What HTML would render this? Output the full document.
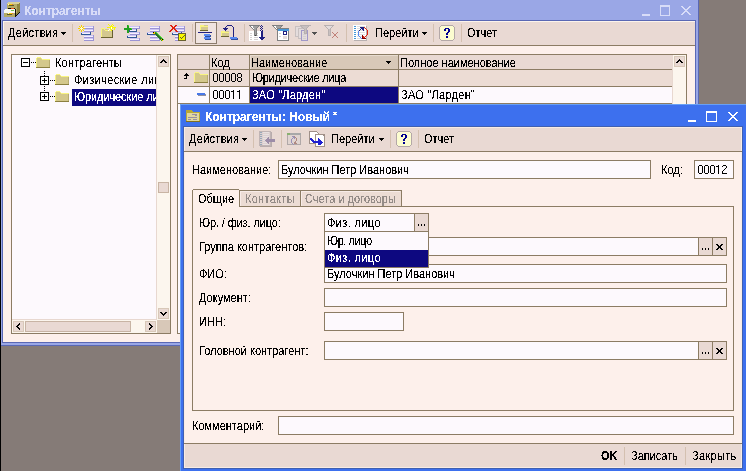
<!DOCTYPE html>
<html><head><meta charset="utf-8">
<style>
html,body{margin:0;padding:0;}
body{width:746px;height:471px;overflow:hidden;position:relative;background:#857b77;font-family:"Liberation Sans",sans-serif;font-size:11px;color:#000;}
.a{position:absolute;box-sizing:border-box;display:block;}
.t{position:absolute;white-space:pre;line-height:13px;font-size:11px;filter:url(#cr);}
.clip{position:absolute;overflow:hidden;}
.s{display:inline-block;transform:scaleY(1.125);transform-origin:0 10px;}
</style></head><body>
<svg width="0" height="0" style="position:absolute"><filter id="cr" x="0" y="0" width="100%" height="100%"><feComponentTransfer><feFuncA type="discrete" tableValues="0 0 0 0 0 0 0 0 0 0 0 0 0 0 0 0 0 0 0 0 0 0 0 0 0 0 0 0 0 0 0 0 0 0 0 0 0 0 0 0 0 0 0 0 1 1 1 1 1 1 1 1 1 1 1 1 1 1 1 1 1 1 1 1 1 1 1 1 1 1 1 1 1 1 1 1 1 1 1 1 1 1 1 1 1 1 1 1 1 1 1 1 1 1 1 1 1 1 1 1"/></feComponentTransfer></filter></svg>
<div class="a" style="left:0px;top:0px;width:1px;height:471px;background:#000;"></div>
<div class="a" style="left:1px;top:0px;width:698px;height:346px;background:#9aa7e6;"></div>
<div class="a" style="left:698px;top:0px;width:1px;height:346px;background:#5a68b4;"></div>
<div class="a" style="left:1px;top:345px;width:698px;height:1px;background:#5a68b4;"></div>
<div class="a" style="left:2px;top:20px;width:694px;height:1px;background:#5a68b4;"></div>
<div class="a" style="left:2px;top:20px;width:1px;height:323px;background:#5a68b4;"></div>
<div class="a" style="left:695px;top:20px;width:1px;height:323px;background:#5a68b4;"></div>
<div class="a" style="left:2px;top:342px;width:694px;height:1px;background:#5a68b4;"></div>
<svg class="a" style="left:2px;top:0px" width="20" height="17" shape-rendering="crispEdges"><rect x="6" y="2" width="12" height="1" fill="#d8d098"/><rect x="5" y="3" width="12" height="1" fill="#d8d098"/><rect x="17" y="3" width="1" height="1" fill="#8c8440"/><rect x="5" y="4" width="1" height="1" fill="#b4ac68"/><rect x="6" y="4" width="1" height="1" fill="#fff8c0"/><rect x="7" y="4" width="3" height="1" fill="#f8c800"/><rect x="10" y="4" width="1" height="1" fill="#f07030"/><rect x="11" y="4" width="4" height="1" fill="#b4ac68"/><rect x="15" y="4" width="3" height="1" fill="#8c8440"/><rect x="5" y="5" width="2" height="1" fill="#b4ac68"/><rect x="7" y="5" width="5" height="1" fill="#5c5828"/><rect x="12" y="5" width="3" height="1" fill="#b4ac68"/><rect x="15" y="5" width="3" height="1" fill="#8c8440"/><rect x="5" y="6" width="10" height="1" fill="#b4ac68"/><rect x="15" y="6" width="3" height="1" fill="#8c8440"/><rect x="5" y="7" width="10" height="1" fill="#b4ac68"/><rect x="15" y="7" width="3" height="1" fill="#8c8440"/><rect x="5" y="8" width="1" height="1" fill="#b4ac68"/><rect x="6" y="8" width="3" height="1" fill="#101008"/><rect x="9" y="8" width="3" height="1" fill="#f05818"/><rect x="12" y="8" width="1" height="1" fill="#101008"/><rect x="13" y="8" width="2" height="1" fill="#b4ac68"/><rect x="15" y="8" width="3" height="1" fill="#8c8440"/><rect x="3" y="9" width="10" height="1" fill="#f8f8f0"/><rect x="13" y="9" width="1" height="1" fill="#101008"/><rect x="14" y="9" width="1" height="1" fill="#b4ac68"/><rect x="15" y="9" width="3" height="1" fill="#8c8440"/><rect x="2" y="10" width="7" height="1" fill="#f8f8f0"/><rect x="9" y="10" width="3" height="1" fill="#70c050"/><rect x="12" y="10" width="1" height="1" fill="#f8f8f0"/><rect x="13" y="10" width="1" height="1" fill="#101008"/><rect x="14" y="10" width="1" height="1" fill="#b4ac68"/><rect x="15" y="10" width="3" height="1" fill="#8c8440"/><rect x="2" y="11" width="11" height="1" fill="#f8f8f0"/><rect x="13" y="11" width="1" height="1" fill="#101008"/><rect x="14" y="11" width="1" height="1" fill="#b4ac68"/><rect x="15" y="11" width="3" height="1" fill="#8c8440"/><rect x="2" y="12" width="11" height="1" fill="#f8f8f0"/><rect x="13" y="12" width="1" height="1" fill="#101008"/><rect x="14" y="12" width="1" height="1" fill="#b4ac68"/><rect x="15" y="12" width="2" height="1" fill="#8c8440"/><rect x="17" y="12" width="1" height="1" fill="#101008"/><rect x="2" y="13" width="4" height="1" fill="#b4ac68"/><rect x="6" y="13" width="1" height="1" fill="#fff8c0"/><rect x="7" y="13" width="3" height="1" fill="#f8c800"/><rect x="10" y="13" width="1" height="1" fill="#f07030"/><rect x="11" y="13" width="2" height="1" fill="#b4ac68"/><rect x="13" y="13" width="1" height="1" fill="#101008"/><rect x="14" y="13" width="2" height="1" fill="#8c8440"/><rect x="16" y="13" width="1" height="1" fill="#101008"/><rect x="2" y="14" width="3" height="1" fill="#b4ac68"/><rect x="5" y="14" width="5" height="1" fill="#5c5828"/><rect x="10" y="14" width="3" height="1" fill="#b4ac68"/><rect x="13" y="14" width="1" height="1" fill="#101008"/><rect x="14" y="14" width="1" height="1" fill="#8c8440"/><rect x="15" y="14" width="1" height="1" fill="#101008"/><rect x="2" y="15" width="11" height="1" fill="#b4ac68"/><rect x="13" y="15" width="2" height="1" fill="#101008"/><rect x="2" y="16" width="11" height="1" fill="#b4ac68"/><rect x="13" y="16" width="1" height="1" fill="#101008"/></svg>
<div class="t" style="left:24px;top:4px;color:#d8dcf8;font-weight:bold;font-size:12px;line-height:15px;">Контрагенты</div>
<div class="a" style="left:642px;top:14px;width:8px;height:2px;background:#d8dcf8;"></div>
<div class="a" style="left:660px;top:5px;width:10px;height:2px;background:#d8dcf8;"></div>
<div class="a" style="left:660px;top:5px;width:1px;height:11px;background:#d8dcf8;"></div>
<div class="a" style="left:669px;top:5px;width:1px;height:11px;background:#d8dcf8;"></div>
<div class="a" style="left:660px;top:15px;width:10px;height:1px;background:#d8dcf8;"></div>
<svg class="a" style="left:681px;top:6px" width="10" height="9" shape-rendering="crispEdges"><rect x="0" y="0" width="2" height="1" fill="#d8dcf8"/><rect x="8" y="0" width="2" height="1" fill="#d8dcf8"/><rect x="1" y="1" width="2" height="1" fill="#d8dcf8"/><rect x="7" y="1" width="2" height="1" fill="#d8dcf8"/><rect x="2" y="2" width="2" height="1" fill="#d8dcf8"/><rect x="6" y="2" width="2" height="1" fill="#d8dcf8"/><rect x="3" y="3" width="4" height="1" fill="#d8dcf8"/><rect x="4" y="4" width="2" height="1" fill="#d8dcf8"/><rect x="3" y="5" width="4" height="1" fill="#d8dcf8"/><rect x="2" y="6" width="2" height="1" fill="#d8dcf8"/><rect x="6" y="6" width="2" height="1" fill="#d8dcf8"/><rect x="1" y="7" width="2" height="1" fill="#d8dcf8"/><rect x="7" y="7" width="2" height="1" fill="#d8dcf8"/><rect x="0" y="8" width="2" height="1" fill="#d8dcf8"/><rect x="8" y="8" width="2" height="1" fill="#d8dcf8"/></svg>
<div class="a" style="left:3px;top:21px;width:692px;height:24px;background:#e9d9d3;"></div>
<div class="a" style="left:3px;top:21px;width:692px;height:1px;background:#fcf4ec;"></div>
<div class="a" style="left:3px;top:21px;width:1px;height:24px;background:#fcf4ec;"></div>
<div class="a" style="left:3px;top:45px;width:692px;height:1px;background:#8c7c64;"></div>
<div class="a" style="left:3px;top:46px;width:692px;height:296px;background:#fdf0eb;"></div>
<div class="t" style="left:8px;top:27px;letter-spacing:0.29px;"><span class="s">Действия</span></div>
<svg class="a" style="left:61px;top:32px;" width="5" height="3" viewBox="0 0 5 3" shape-rendering="crispEdges"><path d="M0 0h5v1h-1v1h-1v1h-1v-1h-1v-1h-1z" fill="#000"/></svg>
<div class="a" style="left:72px;top:24px;width:1px;height:18px;background:#d4c0b0;"></div>
<svg class="a" style="left:76px;top:22px" width="18" height="19" shape-rendering="crispEdges"><rect x="5" y="3" width="1" height="1" fill="#f8d000"/><rect x="3" y="4" width="1" height="1" fill="#f8d000"/><rect x="5" y="4" width="1" height="1" fill="#f8d000"/><rect x="7" y="4" width="1" height="1" fill="#f8d000"/><rect x="8" y="4" width="9" height="1" fill="#ccc4f4"/><rect x="17" y="4" width="1" height="1" fill="#9c94d4"/><rect x="4" y="5" width="1" height="1" fill="#f8d000"/><rect x="5" y="5" width="1" height="1" fill="#fffcd0"/><rect x="6" y="5" width="1" height="1" fill="#f8d000"/><rect x="8" y="5" width="9" height="1" fill="#f4f0fc"/><rect x="17" y="5" width="1" height="1" fill="#9c94d4"/><rect x="2" y="6" width="2" height="1" fill="#f8d000"/><rect x="4" y="6" width="3" height="1" fill="#fffcd0"/><rect x="7" y="6" width="2" height="1" fill="#f8d000"/><rect x="9" y="6" width="9" height="1" fill="#9c94d4"/><rect x="4" y="7" width="1" height="1" fill="#f8d000"/><rect x="5" y="7" width="1" height="1" fill="#fffcd0"/><rect x="6" y="7" width="1" height="1" fill="#f8d000"/><rect x="8" y="7" width="9" height="1" fill="#ccc4f4"/><rect x="17" y="7" width="1" height="1" fill="#9c94d4"/><rect x="3" y="8" width="1" height="1" fill="#f8d000"/><rect x="5" y="8" width="1" height="1" fill="#f8d000"/><rect x="7" y="8" width="1" height="1" fill="#f8d000"/><rect x="8" y="8" width="9" height="1" fill="#f4f0fc"/><rect x="17" y="8" width="1" height="1" fill="#9c94d4"/><rect x="5" y="9" width="1" height="1" fill="#f8d000"/><rect x="8" y="9" width="10" height="1" fill="#9c94d4"/><rect x="5" y="10" width="9" height="1" fill="#ccc4f4"/><rect x="14" y="10" width="1" height="1" fill="#305894"/><rect x="5" y="11" width="1" height="1" fill="#305894"/><rect x="6" y="11" width="8" height="1" fill="#f4f0fc"/><rect x="14" y="11" width="1" height="1" fill="#305894"/><rect x="5" y="12" width="10" height="1" fill="#305894"/><rect x="8" y="13" width="9" height="1" fill="#ccc4f4"/><rect x="17" y="13" width="1" height="1" fill="#9c94d4"/><rect x="8" y="14" width="9" height="1" fill="#f4f0fc"/><rect x="17" y="14" width="1" height="1" fill="#9c94d4"/><rect x="8" y="15" width="10" height="1" fill="#9c94d4"/><rect x="8" y="16" width="9" height="1" fill="#ccc4f4"/><rect x="17" y="16" width="1" height="1" fill="#9c94d4"/><rect x="8" y="17" width="9" height="1" fill="#f4f0fc"/><rect x="17" y="17" width="1" height="1" fill="#9c94d4"/><rect x="8" y="18" width="10" height="1" fill="#9c94d4"/></svg>
<svg class="a" style="left:98px;top:22px" width="19" height="17" shape-rendering="crispEdges"><rect x="10" y="2" width="1" height="1" fill="#f8f800"/><rect x="14" y="2" width="1" height="1" fill="#f8f800"/><rect x="11" y="3" width="1" height="1" fill="#f8f800"/><rect x="13" y="3" width="1" height="1" fill="#f8f800"/><rect x="15" y="3" width="1" height="1" fill="#f8f800"/><rect x="12" y="4" width="3" height="1" fill="#f8f800"/><rect x="9" y="5" width="4" height="1" fill="#f8f800"/><rect x="13" y="5" width="1" height="1" fill="#ffffff"/><rect x="14" y="5" width="4" height="1" fill="#f8f800"/><rect x="3" y="6" width="4" height="1" fill="#f8f480"/><rect x="12" y="6" width="1" height="1" fill="#f8f800"/><rect x="13" y="6" width="1" height="1" fill="#ffffff"/><rect x="14" y="6" width="1" height="1" fill="#f8f800"/><rect x="16" y="6" width="1" height="1" fill="#f8f800"/><rect x="3" y="7" width="1" height="1" fill="#f8f480"/><rect x="4" y="7" width="2" height="1" fill="#d4c890"/><rect x="6" y="7" width="1" height="1" fill="#f8f480"/><rect x="7" y="7" width="4" height="1" fill="#d4c890"/><rect x="11" y="7" width="1" height="1" fill="#ffffff"/><rect x="12" y="7" width="1" height="1" fill="#d4c890"/><rect x="13" y="7" width="1" height="1" fill="#f8f800"/><rect x="16" y="7" width="1" height="1" fill="#f8f800"/><rect x="3" y="8" width="1" height="1" fill="#f8f480"/><rect x="4" y="8" width="3" height="1" fill="#d4c890"/><rect x="7" y="8" width="3" height="1" fill="#f8f480"/><rect x="10" y="8" width="1" height="1" fill="#ffffff"/><rect x="11" y="8" width="2" height="1" fill="#f8f480"/><rect x="13" y="8" width="1" height="1" fill="#f8f800"/><rect x="14" y="8" width="1" height="1" fill="#686030"/><rect x="3" y="9" width="1" height="1" fill="#f8f480"/><rect x="4" y="9" width="10" height="1" fill="#d4c890"/><rect x="14" y="9" width="1" height="1" fill="#686030"/><rect x="3" y="10" width="1" height="1" fill="#f8f480"/><rect x="4" y="10" width="10" height="1" fill="#d4c890"/><rect x="14" y="10" width="1" height="1" fill="#686030"/><rect x="3" y="11" width="1" height="1" fill="#f8f480"/><rect x="4" y="11" width="10" height="1" fill="#d4c890"/><rect x="14" y="11" width="1" height="1" fill="#686030"/><rect x="3" y="12" width="1" height="1" fill="#f8f480"/><rect x="4" y="12" width="10" height="1" fill="#d4c890"/><rect x="14" y="12" width="1" height="1" fill="#686030"/><rect x="3" y="13" width="1" height="1" fill="#f8f480"/><rect x="4" y="13" width="10" height="1" fill="#d4c890"/><rect x="14" y="13" width="1" height="1" fill="#686030"/><rect x="3" y="14" width="1" height="1" fill="#f8f480"/><rect x="4" y="14" width="10" height="1" fill="#d4c890"/><rect x="14" y="14" width="1" height="1" fill="#686030"/><rect x="3" y="15" width="11" height="1" fill="#6c6430"/><rect x="14" y="15" width="1" height="1" fill="#686030"/></svg>
<svg class="a" style="left:122px;top:22px" width="18" height="19" shape-rendering="crispEdges"><rect x="5" y="3" width="1" height="1" fill="#20a020"/><rect x="6" y="3" width="1" height="1" fill="#58d838"/><rect x="5" y="4" width="2" height="1" fill="#20a020"/><rect x="8" y="4" width="9" height="1" fill="#ccc4f4"/><rect x="17" y="4" width="1" height="1" fill="#9c94d4"/><rect x="5" y="5" width="2" height="1" fill="#20a020"/><rect x="8" y="5" width="9" height="1" fill="#f4f0fc"/><rect x="17" y="5" width="1" height="1" fill="#9c94d4"/><rect x="2" y="6" width="7" height="1" fill="#20a020"/><rect x="9" y="6" width="1" height="1" fill="#58d838"/><rect x="10" y="6" width="8" height="1" fill="#9c94d4"/><rect x="2" y="7" width="8" height="1" fill="#20a020"/><rect x="10" y="7" width="4" height="1" fill="#ccc4f4"/><rect x="14" y="7" width="1" height="1" fill="#305894"/><rect x="5" y="8" width="2" height="1" fill="#20a020"/><rect x="7" y="8" width="1" height="1" fill="#305894"/><rect x="8" y="8" width="6" height="1" fill="#f4f0fc"/><rect x="14" y="8" width="1" height="1" fill="#305894"/><rect x="5" y="9" width="2" height="1" fill="#20a020"/><rect x="7" y="9" width="8" height="1" fill="#305894"/><rect x="5" y="10" width="2" height="1" fill="#20a020"/><rect x="8" y="10" width="9" height="1" fill="#ccc4f4"/><rect x="17" y="10" width="1" height="1" fill="#9c94d4"/><rect x="8" y="11" width="9" height="1" fill="#f4f0fc"/><rect x="17" y="11" width="1" height="1" fill="#9c94d4"/><rect x="8" y="12" width="10" height="1" fill="#9c94d4"/><rect x="5" y="13" width="9" height="1" fill="#ccc4f4"/><rect x="14" y="13" width="1" height="1" fill="#305894"/><rect x="5" y="14" width="1" height="1" fill="#305894"/><rect x="6" y="14" width="8" height="1" fill="#f4f0fc"/><rect x="14" y="14" width="1" height="1" fill="#305894"/><rect x="5" y="15" width="10" height="1" fill="#305894"/><rect x="8" y="16" width="9" height="1" fill="#ccc4f4"/><rect x="17" y="16" width="1" height="1" fill="#9c94d4"/><rect x="8" y="17" width="9" height="1" fill="#f4f0fc"/><rect x="17" y="17" width="1" height="1" fill="#9c94d4"/><rect x="8" y="18" width="10" height="1" fill="#9c94d4"/></svg>
<svg class="a" style="left:145px;top:22px" width="19" height="19" shape-rendering="crispEdges"><rect x="5" y="4" width="9" height="1" fill="#ccc4f4"/><rect x="14" y="4" width="1" height="1" fill="#9c94d4"/><rect x="5" y="5" width="9" height="1" fill="#f4f0fc"/><rect x="14" y="5" width="1" height="1" fill="#9c94d4"/><rect x="5" y="6" width="10" height="1" fill="#9c94d4"/><rect x="5" y="7" width="9" height="1" fill="#ccc4f4"/><rect x="14" y="7" width="1" height="1" fill="#9c94d4"/><rect x="5" y="8" width="9" height="1" fill="#f4f0fc"/><rect x="14" y="8" width="1" height="1" fill="#9c94d4"/><rect x="5" y="9" width="10" height="1" fill="#9c94d4"/><rect x="2" y="10" width="6" height="1" fill="#ccc4f4"/><rect x="8" y="10" width="1" height="1" fill="#000000"/><rect x="9" y="10" width="1" height="1" fill="#f8d000"/><rect x="10" y="10" width="1" height="1" fill="#20a020"/><rect x="11" y="10" width="1" height="1" fill="#58d838"/><rect x="2" y="11" width="1" height="1" fill="#305894"/><rect x="3" y="11" width="5" height="1" fill="#f4f0fc"/><rect x="8" y="11" width="2" height="1" fill="#f8d000"/><rect x="10" y="11" width="1" height="1" fill="#404040"/><rect x="11" y="11" width="1" height="1" fill="#20a020"/><rect x="12" y="11" width="1" height="1" fill="#58d838"/><rect x="2" y="12" width="8" height="1" fill="#305894"/><rect x="10" y="12" width="1" height="1" fill="#20a020"/><rect x="11" y="12" width="1" height="1" fill="#404040"/><rect x="12" y="12" width="1" height="1" fill="#20a020"/><rect x="13" y="12" width="1" height="1" fill="#58d838"/><rect x="5" y="13" width="6" height="1" fill="#ccc4f4"/><rect x="11" y="13" width="1" height="1" fill="#20a020"/><rect x="12" y="13" width="1" height="1" fill="#404040"/><rect x="13" y="13" width="1" height="1" fill="#20a020"/><rect x="14" y="13" width="1" height="1" fill="#58d838"/><rect x="5" y="14" width="7" height="1" fill="#f4f0fc"/><rect x="12" y="14" width="1" height="1" fill="#20a020"/><rect x="13" y="14" width="1" height="1" fill="#404040"/><rect x="14" y="14" width="1" height="1" fill="#20a020"/><rect x="15" y="14" width="1" height="1" fill="#58d838"/><rect x="5" y="15" width="8" height="1" fill="#9c94d4"/><rect x="13" y="15" width="1" height="1" fill="#20a020"/><rect x="14" y="15" width="1" height="1" fill="#404040"/><rect x="15" y="15" width="1" height="1" fill="#20a020"/><rect x="16" y="15" width="1" height="1" fill="#58d838"/><rect x="5" y="16" width="9" height="1" fill="#ccc4f4"/><rect x="14" y="16" width="1" height="1" fill="#20a020"/><rect x="15" y="16" width="1" height="1" fill="#404040"/><rect x="16" y="16" width="1" height="1" fill="#20a020"/><rect x="17" y="16" width="1" height="1" fill="#58d838"/><rect x="5" y="17" width="9" height="1" fill="#f4f0fc"/><rect x="14" y="17" width="1" height="1" fill="#9c94d4"/><rect x="15" y="17" width="1" height="1" fill="#20a020"/><rect x="16" y="17" width="1" height="1" fill="#f8d000"/><rect x="17" y="17" width="1" height="1" fill="#000000"/><rect x="18" y="17" width="1" height="1" fill="#58d838"/><rect x="5" y="18" width="10" height="1" fill="#9c94d4"/><rect x="16" y="18" width="1" height="1" fill="#20a020"/><rect x="17" y="18" width="1" height="1" fill="#f8d000"/></svg>
<svg class="a" style="left:168px;top:22px" width="19" height="19" shape-rendering="crispEdges"><rect x="2" y="3" width="2" height="1" fill="#e02010"/><rect x="7" y="3" width="2" height="1" fill="#e02010"/><rect x="3" y="4" width="2" height="1" fill="#e02010"/><rect x="6" y="4" width="2" height="1" fill="#e02010"/><rect x="8" y="4" width="8" height="1" fill="#ccc4f4"/><rect x="16" y="4" width="1" height="1" fill="#9c94d4"/><rect x="4" y="5" width="3" height="1" fill="#e02010"/><rect x="7" y="5" width="9" height="1" fill="#f4f0fc"/><rect x="16" y="5" width="1" height="1" fill="#9c94d4"/><rect x="4" y="6" width="3" height="1" fill="#e02010"/><rect x="7" y="6" width="10" height="1" fill="#9c94d4"/><rect x="3" y="7" width="2" height="1" fill="#e02010"/><rect x="6" y="7" width="2" height="1" fill="#e02010"/><rect x="8" y="7" width="8" height="1" fill="#ccc4f4"/><rect x="16" y="7" width="1" height="1" fill="#9c94d4"/><rect x="2" y="8" width="2" height="1" fill="#e02010"/><rect x="7" y="8" width="2" height="1" fill="#e02010"/><rect x="9" y="8" width="7" height="1" fill="#f4f0fc"/><rect x="16" y="8" width="1" height="1" fill="#9c94d4"/><rect x="1" y="9" width="2" height="1" fill="#e02010"/><rect x="7" y="9" width="1" height="1" fill="#9c94d4"/><rect x="8" y="9" width="2" height="1" fill="#e02010"/><rect x="10" y="9" width="7" height="1" fill="#9c94d4"/><rect x="4" y="10" width="9" height="1" fill="#ccc4f4"/><rect x="13" y="10" width="1" height="1" fill="#305894"/><rect x="4" y="11" width="1" height="1" fill="#305894"/><rect x="5" y="11" width="5" height="1" fill="#f4f0fc"/><rect x="10" y="11" width="8" height="1" fill="#686030"/><rect x="4" y="12" width="6" height="1" fill="#305894"/><rect x="10" y="12" width="1" height="1" fill="#686030"/><rect x="11" y="12" width="6" height="1" fill="#f8f800"/><rect x="17" y="12" width="1" height="1" fill="#686030"/><rect x="7" y="13" width="3" height="1" fill="#ccc4f4"/><rect x="10" y="13" width="1" height="1" fill="#686030"/><rect x="11" y="13" width="5" height="1" fill="#f8f800"/><rect x="16" y="13" width="2" height="1" fill="#686030"/><rect x="7" y="14" width="3" height="1" fill="#f4f0fc"/><rect x="10" y="14" width="1" height="1" fill="#686030"/><rect x="11" y="14" width="4" height="1" fill="#f8f800"/><rect x="15" y="14" width="1" height="1" fill="#686030"/><rect x="16" y="14" width="1" height="1" fill="#f8f800"/><rect x="17" y="14" width="1" height="1" fill="#686030"/><rect x="7" y="15" width="3" height="1" fill="#9c94d4"/><rect x="10" y="15" width="1" height="1" fill="#686030"/><rect x="11" y="15" width="1" height="1" fill="#f8f800"/><rect x="12" y="15" width="1" height="1" fill="#686030"/><rect x="13" y="15" width="1" height="1" fill="#f8f800"/><rect x="14" y="15" width="1" height="1" fill="#686030"/><rect x="15" y="15" width="2" height="1" fill="#f8f800"/><rect x="17" y="15" width="1" height="1" fill="#686030"/><rect x="7" y="16" width="3" height="1" fill="#ccc4f4"/><rect x="10" y="16" width="1" height="1" fill="#686030"/><rect x="11" y="16" width="2" height="1" fill="#f8f800"/><rect x="13" y="16" width="1" height="1" fill="#686030"/><rect x="14" y="16" width="3" height="1" fill="#f8f800"/><rect x="17" y="16" width="1" height="1" fill="#686030"/><rect x="7" y="17" width="3" height="1" fill="#f4f0fc"/><rect x="10" y="17" width="1" height="1" fill="#686030"/><rect x="11" y="17" width="6" height="1" fill="#f8f800"/><rect x="17" y="17" width="1" height="1" fill="#686030"/><rect x="7" y="18" width="3" height="1" fill="#9c94d4"/><rect x="10" y="18" width="8" height="1" fill="#686030"/></svg>
<div class="a" style="left:192px;top:24px;width:1px;height:18px;background:#d4c0b0;"></div>
<div class="a" style="left:195px;top:22px;width:22px;height:22px;border:1px solid #8c7c6c;background:#f0e4e0;"></div>
<svg class="a" style="left:194px;top:21px" width="18" height="20" shape-rendering="crispEdges"><rect x="6" y="4" width="4" height="1" fill="#f8f480"/><rect x="10" y="4" width="4" height="1" fill="#d4c890"/><rect x="6" y="5" width="8" height="1" fill="#f8f480"/><rect x="6" y="6" width="1" height="1" fill="#f8f480"/><rect x="7" y="6" width="7" height="1" fill="#d4c890"/><rect x="6" y="7" width="1" height="1" fill="#f8f480"/><rect x="7" y="7" width="7" height="1" fill="#d4c890"/><rect x="6" y="8" width="1" height="1" fill="#f8f480"/><rect x="7" y="8" width="7" height="1" fill="#d4c890"/><rect x="6" y="9" width="8" height="1" fill="#6c6430"/><rect x="4" y="11" width="14" height="1" fill="#202080"/><rect x="10" y="13" width="6" height="1" fill="#5888f0"/><rect x="10" y="14" width="6" height="1" fill="#5888f0"/><rect x="16" y="14" width="1" height="1" fill="#3050a0"/><rect x="11" y="15" width="6" height="1" fill="#3050a0"/><rect x="10" y="16" width="6" height="1" fill="#5888f0"/><rect x="10" y="17" width="6" height="1" fill="#5888f0"/><rect x="16" y="17" width="1" height="1" fill="#3050a0"/><rect x="11" y="18" width="6" height="1" fill="#3050a0"/></svg>
<svg class="a" style="left:219px;top:22px" width="19" height="19" shape-rendering="crispEdges"><rect x="8" y="3" width="5" height="1" fill="#202080"/><rect x="7" y="4" width="1" height="1" fill="#202080"/><rect x="13" y="4" width="1" height="1" fill="#202080"/><rect x="6" y="5" width="1" height="1" fill="#202080"/><rect x="14" y="5" width="1" height="1" fill="#202080"/><rect x="4" y="6" width="5" height="1" fill="#202080"/><rect x="14" y="6" width="1" height="1" fill="#202080"/><rect x="5" y="7" width="3" height="1" fill="#202080"/><rect x="14" y="7" width="1" height="1" fill="#202080"/><rect x="6" y="8" width="1" height="1" fill="#202080"/><rect x="14" y="8" width="1" height="1" fill="#202080"/><rect x="2" y="9" width="4" height="1" fill="#f8f480"/><rect x="6" y="9" width="4" height="1" fill="#d4c890"/><rect x="14" y="9" width="1" height="1" fill="#202080"/><rect x="2" y="10" width="8" height="1" fill="#f8f480"/><rect x="14" y="10" width="1" height="1" fill="#202080"/><rect x="2" y="11" width="1" height="1" fill="#f8f480"/><rect x="3" y="11" width="7" height="1" fill="#d4c890"/><rect x="14" y="11" width="1" height="1" fill="#202080"/><rect x="2" y="12" width="1" height="1" fill="#f8f480"/><rect x="3" y="12" width="7" height="1" fill="#d4c890"/><rect x="14" y="12" width="1" height="1" fill="#202080"/><rect x="2" y="13" width="1" height="1" fill="#f8f480"/><rect x="3" y="13" width="7" height="1" fill="#d4c890"/><rect x="14" y="13" width="1" height="1" fill="#202080"/><rect x="2" y="14" width="8" height="1" fill="#6c6430"/><rect x="14" y="14" width="1" height="1" fill="#202080"/><rect x="11" y="15" width="7" height="1" fill="#5888f0"/><rect x="11" y="16" width="7" height="1" fill="#5888f0"/><rect x="18" y="16" width="1" height="1" fill="#3050a0"/><rect x="12" y="17" width="7" height="1" fill="#3050a0"/></svg>
<div class="a" style="left:244px;top:24px;width:1px;height:18px;background:#d4c0b0;"></div>
<svg class="a" style="left:246px;top:22px" width="19" height="19" shape-rendering="crispEdges"><rect x="3" y="3" width="11" height="1" fill="#808080"/><rect x="15" y="3" width="1" height="1" fill="#202080"/><rect x="4" y="4" width="1" height="1" fill="#808080"/><rect x="5" y="4" width="2" height="1" fill="#ffffff"/><rect x="7" y="4" width="5" height="1" fill="#a0a0a0"/><rect x="12" y="4" width="1" height="1" fill="#808080"/><rect x="14" y="4" width="1" height="1" fill="#202080"/><rect x="16" y="4" width="1" height="1" fill="#202080"/><rect x="5" y="5" width="1" height="1" fill="#808080"/><rect x="6" y="5" width="1" height="1" fill="#ffffff"/><rect x="7" y="5" width="4" height="1" fill="#a0a0a0"/><rect x="11" y="5" width="1" height="1" fill="#808080"/><rect x="15" y="5" width="1" height="1" fill="#202080"/><rect x="6" y="6" width="1" height="1" fill="#808080"/><rect x="7" y="6" width="1" height="1" fill="#ffffff"/><rect x="8" y="6" width="2" height="1" fill="#a0a0a0"/><rect x="10" y="6" width="1" height="1" fill="#808080"/><rect x="14" y="6" width="1" height="1" fill="#202080"/><rect x="16" y="6" width="1" height="1" fill="#202080"/><rect x="7" y="7" width="1" height="1" fill="#808080"/><rect x="8" y="7" width="2" height="1" fill="#a0a0a0"/><rect x="10" y="7" width="1" height="1" fill="#808080"/><rect x="15" y="7" width="1" height="1" fill="#202080"/><rect x="8" y="8" width="1" height="1" fill="#808080"/><rect x="9" y="8" width="1" height="1" fill="#a0a0a0"/><rect x="10" y="8" width="1" height="1" fill="#808080"/><rect x="14" y="8" width="1" height="1" fill="#202080"/><rect x="16" y="8" width="1" height="1" fill="#202080"/><rect x="3" y="9" width="5" height="1" fill="#ffffff"/><rect x="8" y="9" width="1" height="1" fill="#808080"/><rect x="9" y="9" width="1" height="1" fill="#a0a0a0"/><rect x="10" y="9" width="1" height="1" fill="#808080"/><rect x="11" y="9" width="4" height="1" fill="#ffffff"/><rect x="15" y="9" width="2" height="1" fill="#202080"/><rect x="3" y="10" width="5" height="1" fill="#ffffff"/><rect x="8" y="10" width="1" height="1" fill="#808080"/><rect x="9" y="10" width="1" height="1" fill="#a0a0a0"/><rect x="10" y="10" width="1" height="1" fill="#808080"/><rect x="11" y="10" width="4" height="1" fill="#ffffff"/><rect x="15" y="10" width="2" height="1" fill="#202080"/><rect x="3" y="11" width="1" height="1" fill="#ffffff"/><rect x="4" y="11" width="2" height="1" fill="#d4d0d0"/><rect x="6" y="11" width="2" height="1" fill="#ffffff"/><rect x="8" y="11" width="1" height="1" fill="#808080"/><rect x="9" y="11" width="1" height="1" fill="#a0a0a0"/><rect x="10" y="11" width="1" height="1" fill="#808080"/><rect x="11" y="11" width="1" height="1" fill="#d4d0d0"/><rect x="12" y="11" width="3" height="1" fill="#ffffff"/><rect x="15" y="11" width="2" height="1" fill="#202080"/><rect x="3" y="12" width="5" height="1" fill="#ffffff"/><rect x="8" y="12" width="1" height="1" fill="#808080"/><rect x="9" y="12" width="1" height="1" fill="#a0a0a0"/><rect x="10" y="12" width="1" height="1" fill="#808080"/><rect x="11" y="12" width="4" height="1" fill="#ffffff"/><rect x="15" y="12" width="2" height="1" fill="#202080"/><rect x="3" y="13" width="1" height="1" fill="#ffffff"/><rect x="4" y="13" width="2" height="1" fill="#d4d0d0"/><rect x="6" y="13" width="2" height="1" fill="#ffffff"/><rect x="8" y="13" width="1" height="1" fill="#808080"/><rect x="9" y="13" width="1" height="1" fill="#404040"/><rect x="10" y="13" width="1" height="1" fill="#808080"/><rect x="11" y="13" width="1" height="1" fill="#d4d0d0"/><rect x="12" y="13" width="3" height="1" fill="#ffffff"/><rect x="15" y="13" width="2" height="1" fill="#202080"/><rect x="3" y="14" width="12" height="1" fill="#ffffff"/><rect x="15" y="14" width="2" height="1" fill="#202080"/><rect x="3" y="15" width="1" height="1" fill="#ffffff"/><rect x="4" y="15" width="2" height="1" fill="#d4d0d0"/><rect x="6" y="15" width="2" height="1" fill="#ffffff"/><rect x="8" y="15" width="4" height="1" fill="#d4d0d0"/><rect x="12" y="15" width="1" height="1" fill="#ffffff"/><rect x="13" y="15" width="6" height="1" fill="#202080"/><rect x="3" y="16" width="11" height="1" fill="#ffffff"/><rect x="14" y="16" width="4" height="1" fill="#202080"/><rect x="3" y="17" width="1" height="1" fill="#ffffff"/><rect x="4" y="17" width="2" height="1" fill="#d4d0d0"/><rect x="6" y="17" width="2" height="1" fill="#ffffff"/><rect x="8" y="17" width="4" height="1" fill="#d4d0d0"/><rect x="12" y="17" width="3" height="1" fill="#ffffff"/><rect x="15" y="17" width="2" height="1" fill="#202080"/><rect x="3" y="18" width="12" height="1" fill="#ffffff"/></svg>
<svg class="a" style="left:269px;top:22px" width="20" height="19" shape-rendering="crispEdges"><rect x="3" y="3" width="11" height="1" fill="#808080"/><rect x="4" y="4" width="1" height="1" fill="#808080"/><rect x="5" y="4" width="2" height="1" fill="#ffffff"/><rect x="7" y="4" width="5" height="1" fill="#a0a0a0"/><rect x="12" y="4" width="1" height="1" fill="#808080"/><rect x="5" y="5" width="1" height="1" fill="#808080"/><rect x="6" y="5" width="1" height="1" fill="#ffffff"/><rect x="7" y="5" width="4" height="1" fill="#a0a0a0"/><rect x="11" y="5" width="1" height="1" fill="#808080"/><rect x="6" y="6" width="1" height="1" fill="#808080"/><rect x="7" y="6" width="1" height="1" fill="#ffffff"/><rect x="8" y="6" width="12" height="1" fill="#808080"/><rect x="7" y="7" width="2" height="1" fill="#808080"/><rect x="9" y="7" width="11" height="1" fill="#4898d8"/><rect x="8" y="8" width="1" height="1" fill="#808080"/><rect x="9" y="8" width="11" height="1" fill="#4898d8"/><rect x="8" y="9" width="1" height="1" fill="#808080"/><rect x="9" y="9" width="5" height="1" fill="#ffffff"/><rect x="14" y="9" width="4" height="1" fill="#202080"/><rect x="18" y="9" width="1" height="1" fill="#ffffff"/><rect x="19" y="9" width="1" height="1" fill="#808080"/><rect x="8" y="10" width="1" height="1" fill="#808080"/><rect x="9" y="10" width="5" height="1" fill="#ffffff"/><rect x="14" y="10" width="1" height="1" fill="#202080"/><rect x="15" y="10" width="2" height="1" fill="#ffffff"/><rect x="17" y="10" width="1" height="1" fill="#202080"/><rect x="18" y="10" width="1" height="1" fill="#ffffff"/><rect x="19" y="10" width="1" height="1" fill="#808080"/><rect x="8" y="11" width="1" height="1" fill="#808080"/><rect x="9" y="11" width="1" height="1" fill="#ffffff"/><rect x="10" y="11" width="2" height="1" fill="#d4d0d0"/><rect x="12" y="11" width="2" height="1" fill="#ffffff"/><rect x="14" y="11" width="1" height="1" fill="#202080"/><rect x="15" y="11" width="2" height="1" fill="#ffffff"/><rect x="17" y="11" width="1" height="1" fill="#202080"/><rect x="18" y="11" width="1" height="1" fill="#ffffff"/><rect x="19" y="11" width="1" height="1" fill="#808080"/><rect x="8" y="12" width="1" height="1" fill="#808080"/><rect x="9" y="12" width="5" height="1" fill="#ffffff"/><rect x="14" y="12" width="4" height="1" fill="#202080"/><rect x="18" y="12" width="1" height="1" fill="#ffffff"/><rect x="19" y="12" width="1" height="1" fill="#808080"/><rect x="8" y="13" width="1" height="1" fill="#808080"/><rect x="9" y="13" width="10" height="1" fill="#ffffff"/><rect x="19" y="13" width="1" height="1" fill="#808080"/><rect x="8" y="14" width="1" height="1" fill="#808080"/><rect x="9" y="14" width="1" height="1" fill="#ffffff"/><rect x="10" y="14" width="2" height="1" fill="#d4d0d0"/><rect x="12" y="14" width="2" height="1" fill="#ffffff"/><rect x="14" y="14" width="4" height="1" fill="#e4dcdc"/><rect x="18" y="14" width="1" height="1" fill="#ffffff"/><rect x="19" y="14" width="1" height="1" fill="#808080"/><rect x="8" y="15" width="1" height="1" fill="#808080"/><rect x="9" y="15" width="5" height="1" fill="#ffffff"/><rect x="14" y="15" width="4" height="1" fill="#e4dcdc"/><rect x="18" y="15" width="1" height="1" fill="#ffffff"/><rect x="19" y="15" width="1" height="1" fill="#808080"/><rect x="8" y="16" width="1" height="1" fill="#808080"/><rect x="9" y="16" width="5" height="1" fill="#ffffff"/><rect x="14" y="16" width="4" height="1" fill="#e4dcdc"/><rect x="18" y="16" width="1" height="1" fill="#ffffff"/><rect x="19" y="16" width="1" height="1" fill="#808080"/><rect x="8" y="17" width="1" height="1" fill="#808080"/><rect x="9" y="17" width="10" height="1" fill="#ffffff"/><rect x="19" y="17" width="1" height="1" fill="#808080"/><rect x="8" y="18" width="12" height="1" fill="#808080"/></svg>
<svg class="a" style="left:292px;top:22px" width="19" height="19" shape-rendering="crispEdges"><rect x="8" y="3" width="11" height="1" fill="#b8b0b0"/><rect x="3" y="4" width="6" height="1" fill="#c8c0c0"/><rect x="9" y="4" width="1" height="1" fill="#b8b0b0"/><rect x="10" y="4" width="6" height="1" fill="#c8c0c0"/><rect x="16" y="4" width="1" height="1" fill="#b8b0b0"/><rect x="3" y="5" width="1" height="1" fill="#c8c0c0"/><rect x="4" y="5" width="5" height="1" fill="#e4dcdc"/><rect x="9" y="5" width="1" height="1" fill="#c8c0c0"/><rect x="10" y="5" width="1" height="1" fill="#b8b0b0"/><rect x="11" y="5" width="4" height="1" fill="#c8c0c0"/><rect x="15" y="5" width="1" height="1" fill="#b8b0b0"/><rect x="3" y="6" width="1" height="1" fill="#c8c0c0"/><rect x="4" y="6" width="2" height="1" fill="#e4dcdc"/><rect x="6" y="6" width="5" height="1" fill="#c8c0c0"/><rect x="11" y="6" width="1" height="1" fill="#b8b0b0"/><rect x="12" y="6" width="2" height="1" fill="#c8c0c0"/><rect x="14" y="6" width="1" height="1" fill="#b8b0b0"/><rect x="3" y="7" width="1" height="1" fill="#c8c0c0"/><rect x="4" y="7" width="2" height="1" fill="#e4dcdc"/><rect x="6" y="7" width="1" height="1" fill="#c8c0c0"/><rect x="7" y="7" width="5" height="1" fill="#e4dcdc"/><rect x="12" y="7" width="1" height="1" fill="#b8b0b0"/><rect x="13" y="7" width="1" height="1" fill="#c8c0c0"/><rect x="14" y="7" width="1" height="1" fill="#b8b0b0"/><rect x="3" y="8" width="1" height="1" fill="#c8c0c0"/><rect x="4" y="8" width="2" height="1" fill="#e4dcdc"/><rect x="6" y="8" width="1" height="1" fill="#c8c0c0"/><rect x="7" y="8" width="2" height="1" fill="#e4dcdc"/><rect x="9" y="8" width="3" height="1" fill="#a098c8"/><rect x="12" y="8" width="1" height="1" fill="#b8b0b0"/><rect x="13" y="8" width="1" height="1" fill="#c8c0c0"/><rect x="14" y="8" width="1" height="1" fill="#b8b0b0"/><rect x="15" y="8" width="1" height="1" fill="#a098c8"/><rect x="3" y="9" width="1" height="1" fill="#c8c0c0"/><rect x="4" y="9" width="2" height="1" fill="#e4dcdc"/><rect x="6" y="9" width="1" height="1" fill="#c8c0c0"/><rect x="7" y="9" width="2" height="1" fill="#e4dcdc"/><rect x="9" y="9" width="1" height="1" fill="#a098c8"/><rect x="10" y="9" width="2" height="1" fill="#e4dcdc"/><rect x="12" y="9" width="1" height="1" fill="#b8b0b0"/><rect x="13" y="9" width="1" height="1" fill="#c8c0c0"/><rect x="14" y="9" width="1" height="1" fill="#b8b0b0"/><rect x="15" y="9" width="1" height="1" fill="#a098c8"/><rect x="3" y="10" width="1" height="1" fill="#c8c0c0"/><rect x="4" y="10" width="2" height="1" fill="#e4dcdc"/><rect x="6" y="10" width="1" height="1" fill="#c8c0c0"/><rect x="7" y="10" width="2" height="1" fill="#e4dcdc"/><rect x="9" y="10" width="1" height="1" fill="#a098c8"/><rect x="10" y="10" width="1" height="1" fill="#e4dcdc"/><rect x="11" y="10" width="1" height="1" fill="#d4d0d0"/><rect x="12" y="10" width="1" height="1" fill="#b8b0b0"/><rect x="13" y="10" width="1" height="1" fill="#c8c0c0"/><rect x="14" y="10" width="1" height="1" fill="#b8b0b0"/><rect x="15" y="10" width="1" height="1" fill="#a098c8"/><rect x="3" y="11" width="1" height="1" fill="#c8c0c0"/><rect x="4" y="11" width="2" height="1" fill="#e4dcdc"/><rect x="6" y="11" width="1" height="1" fill="#c8c0c0"/><rect x="7" y="11" width="2" height="1" fill="#e4dcdc"/><rect x="9" y="11" width="1" height="1" fill="#a098c8"/><rect x="10" y="11" width="2" height="1" fill="#e4dcdc"/><rect x="12" y="11" width="3" height="1" fill="#b8b0b0"/><rect x="15" y="11" width="1" height="1" fill="#a098c8"/><rect x="3" y="12" width="1" height="1" fill="#c8c0c0"/><rect x="4" y="12" width="2" height="1" fill="#e4dcdc"/><rect x="6" y="12" width="1" height="1" fill="#c8c0c0"/><rect x="7" y="12" width="2" height="1" fill="#e4dcdc"/><rect x="9" y="12" width="1" height="1" fill="#a098c8"/><rect x="10" y="12" width="1" height="1" fill="#e4dcdc"/><rect x="11" y="12" width="3" height="1" fill="#d4d0d0"/><rect x="14" y="12" width="1" height="1" fill="#e4dcdc"/><rect x="15" y="12" width="1" height="1" fill="#a098c8"/><rect x="3" y="13" width="1" height="1" fill="#c8c0c0"/><rect x="4" y="13" width="2" height="1" fill="#e4dcdc"/><rect x="6" y="13" width="1" height="1" fill="#c8c0c0"/><rect x="7" y="13" width="2" height="1" fill="#e4dcdc"/><rect x="9" y="13" width="1" height="1" fill="#a098c8"/><rect x="10" y="13" width="5" height="1" fill="#e4dcdc"/><rect x="15" y="13" width="1" height="1" fill="#a098c8"/><rect x="3" y="14" width="4" height="1" fill="#c8c0c0"/><rect x="7" y="14" width="2" height="1" fill="#e4dcdc"/><rect x="9" y="14" width="1" height="1" fill="#a098c8"/><rect x="10" y="14" width="1" height="1" fill="#e4dcdc"/><rect x="11" y="14" width="3" height="1" fill="#d4d0d0"/><rect x="14" y="14" width="1" height="1" fill="#e4dcdc"/><rect x="15" y="14" width="1" height="1" fill="#a098c8"/><rect x="6" y="15" width="1" height="1" fill="#c8c0c0"/><rect x="7" y="15" width="2" height="1" fill="#e4dcdc"/><rect x="9" y="15" width="1" height="1" fill="#a098c8"/><rect x="10" y="15" width="5" height="1" fill="#e4dcdc"/><rect x="15" y="15" width="1" height="1" fill="#a098c8"/><rect x="6" y="16" width="3" height="1" fill="#c8c0c0"/><rect x="9" y="16" width="1" height="1" fill="#a098c8"/><rect x="10" y="16" width="1" height="1" fill="#e4dcdc"/><rect x="11" y="16" width="3" height="1" fill="#d4d0d0"/><rect x="14" y="16" width="1" height="1" fill="#e4dcdc"/><rect x="15" y="16" width="1" height="1" fill="#a098c8"/><rect x="9" y="17" width="1" height="1" fill="#a098c8"/><rect x="10" y="17" width="5" height="1" fill="#e4dcdc"/><rect x="15" y="17" width="1" height="1" fill="#a098c8"/><rect x="9" y="18" width="7" height="1" fill="#a098c8"/></svg>
<svg class="a" style="left:312px;top:32px;" width="5" height="3" viewBox="0 0 5 3" shape-rendering="crispEdges"><path d="M0 0h5v1h-1v1h-1v1h-1v-1h-1v-1h-1z" fill="#505050"/></svg>
<svg class="a" style="left:322px;top:22px" width="17" height="19" shape-rendering="crispEdges"><rect x="2" y="3" width="10" height="1" fill="#b8b0b0"/><rect x="3" y="4" width="1" height="1" fill="#b8b0b0"/><rect x="4" y="4" width="6" height="1" fill="#e4dcdc"/><rect x="10" y="4" width="1" height="1" fill="#b8b0b0"/><rect x="4" y="5" width="1" height="1" fill="#b8b0b0"/><rect x="5" y="5" width="4" height="1" fill="#e4dcdc"/><rect x="9" y="5" width="1" height="1" fill="#b8b0b0"/><rect x="5" y="6" width="1" height="1" fill="#b8b0b0"/><rect x="6" y="6" width="2" height="1" fill="#e4dcdc"/><rect x="8" y="6" width="1" height="1" fill="#b8b0b0"/><rect x="6" y="7" width="1" height="1" fill="#b8b0b0"/><rect x="7" y="7" width="1" height="1" fill="#c8c0c0"/><rect x="8" y="7" width="1" height="1" fill="#b8b0b0"/><rect x="6" y="8" width="1" height="1" fill="#b8b0b0"/><rect x="7" y="8" width="1" height="1" fill="#c8c0c0"/><rect x="8" y="8" width="1" height="1" fill="#b8b0b0"/><rect x="6" y="9" width="1" height="1" fill="#b8b0b0"/><rect x="7" y="9" width="1" height="1" fill="#c8c0c0"/><rect x="8" y="9" width="1" height="1" fill="#b8b0b0"/><rect x="6" y="10" width="1" height="1" fill="#b8b0b0"/><rect x="7" y="10" width="1" height="1" fill="#c8c0c0"/><rect x="8" y="10" width="1" height="1" fill="#b8b0b0"/><rect x="10" y="10" width="1" height="1" fill="#c08078"/><rect x="15" y="10" width="1" height="1" fill="#c08078"/><rect x="6" y="11" width="1" height="1" fill="#b8b0b0"/><rect x="7" y="11" width="1" height="1" fill="#c8c0c0"/><rect x="8" y="11" width="1" height="1" fill="#b8b0b0"/><rect x="11" y="11" width="1" height="1" fill="#c08078"/><rect x="14" y="11" width="1" height="1" fill="#c08078"/><rect x="6" y="12" width="1" height="1" fill="#b8b0b0"/><rect x="7" y="12" width="1" height="1" fill="#c8c0c0"/><rect x="8" y="12" width="1" height="1" fill="#b8b0b0"/><rect x="12" y="12" width="2" height="1" fill="#c08078"/><rect x="6" y="13" width="3" height="1" fill="#b8b0b0"/><rect x="12" y="13" width="2" height="1" fill="#c08078"/><rect x="11" y="14" width="1" height="1" fill="#c08078"/><rect x="14" y="14" width="1" height="1" fill="#c08078"/><rect x="10" y="15" width="1" height="1" fill="#c08078"/><rect x="15" y="15" width="1" height="1" fill="#c08078"/></svg>
<svg class="a" style="left:348px;top:22px" width="21" height="19" shape-rendering="crispEdges"><rect x="5" y="3" width="13" height="1" fill="#ffffff"/><rect x="5" y="4" width="1" height="1" fill="#ffffff"/><rect x="6" y="4" width="2" height="1" fill="#4898d8"/><rect x="8" y="4" width="1" height="1" fill="#ffffff"/><rect x="9" y="4" width="8" height="1" fill="#e0e0e0"/><rect x="17" y="4" width="1" height="1" fill="#ffffff"/><rect x="18" y="4" width="1" height="1" fill="#b8b0b0"/><rect x="5" y="5" width="7" height="1" fill="#ffffff"/><rect x="12" y="5" width="4" height="1" fill="#202080"/><rect x="16" y="5" width="1" height="1" fill="#e02010"/><rect x="17" y="5" width="1" height="1" fill="#ffffff"/><rect x="18" y="5" width="1" height="1" fill="#b8b0b0"/><rect x="5" y="6" width="1" height="1" fill="#ffffff"/><rect x="6" y="6" width="2" height="1" fill="#4898d8"/><rect x="8" y="6" width="1" height="1" fill="#ffffff"/><rect x="9" y="6" width="4" height="1" fill="#e0e0e0"/><rect x="13" y="6" width="3" height="1" fill="#202080"/><rect x="16" y="6" width="1" height="1" fill="#e0e0e0"/><rect x="17" y="6" width="1" height="1" fill="#e02010"/><rect x="18" y="6" width="1" height="1" fill="#b8b0b0"/><rect x="5" y="7" width="7" height="1" fill="#ffffff"/><rect x="12" y="7" width="1" height="1" fill="#202080"/><rect x="13" y="7" width="1" height="1" fill="#ffffff"/><rect x="14" y="7" width="2" height="1" fill="#202080"/><rect x="16" y="7" width="2" height="1" fill="#ffffff"/><rect x="18" y="7" width="1" height="1" fill="#e02010"/><rect x="5" y="8" width="1" height="1" fill="#ffffff"/><rect x="6" y="8" width="2" height="1" fill="#4898d8"/><rect x="8" y="8" width="1" height="1" fill="#ffffff"/><rect x="9" y="8" width="2" height="1" fill="#e0e0e0"/><rect x="11" y="8" width="1" height="1" fill="#202080"/><rect x="12" y="8" width="3" height="1" fill="#e0e0e0"/><rect x="15" y="8" width="1" height="1" fill="#202080"/><rect x="16" y="8" width="1" height="1" fill="#e0e0e0"/><rect x="17" y="8" width="1" height="1" fill="#ffffff"/><rect x="18" y="8" width="1" height="1" fill="#b8b0b0"/><rect x="19" y="8" width="1" height="1" fill="#e02010"/><rect x="5" y="9" width="5" height="1" fill="#ffffff"/><rect x="10" y="9" width="1" height="1" fill="#5888f0"/><rect x="11" y="9" width="7" height="1" fill="#ffffff"/><rect x="18" y="9" width="1" height="1" fill="#b8b0b0"/><rect x="19" y="9" width="1" height="1" fill="#e02010"/><rect x="5" y="10" width="1" height="1" fill="#ffffff"/><rect x="6" y="10" width="2" height="1" fill="#4898d8"/><rect x="8" y="10" width="1" height="1" fill="#ffffff"/><rect x="9" y="10" width="1" height="1" fill="#e0e0e0"/><rect x="10" y="10" width="1" height="1" fill="#5888f0"/><rect x="11" y="10" width="6" height="1" fill="#e0e0e0"/><rect x="17" y="10" width="1" height="1" fill="#ffffff"/><rect x="18" y="10" width="1" height="1" fill="#b8b0b0"/><rect x="19" y="10" width="1" height="1" fill="#e02010"/><rect x="5" y="11" width="5" height="1" fill="#ffffff"/><rect x="10" y="11" width="1" height="1" fill="#5888f0"/><rect x="11" y="11" width="7" height="1" fill="#ffffff"/><rect x="18" y="11" width="1" height="1" fill="#b8b0b0"/><rect x="19" y="11" width="1" height="1" fill="#e02010"/><rect x="5" y="12" width="1" height="1" fill="#ffffff"/><rect x="6" y="12" width="2" height="1" fill="#4898d8"/><rect x="8" y="12" width="1" height="1" fill="#ffffff"/><rect x="9" y="12" width="1" height="1" fill="#e0e0e0"/><rect x="10" y="12" width="1" height="1" fill="#5888f0"/><rect x="11" y="12" width="6" height="1" fill="#e0e0e0"/><rect x="17" y="12" width="1" height="1" fill="#ffffff"/><rect x="18" y="12" width="1" height="1" fill="#b8b0b0"/><rect x="19" y="12" width="1" height="1" fill="#e02010"/><rect x="5" y="13" width="5" height="1" fill="#ffffff"/><rect x="10" y="13" width="1" height="1" fill="#5888f0"/><rect x="11" y="13" width="3" height="1" fill="#ffffff"/><rect x="14" y="13" width="1" height="1" fill="#800000"/><rect x="15" y="13" width="3" height="1" fill="#ffffff"/><rect x="18" y="13" width="1" height="1" fill="#e02010"/><rect x="5" y="14" width="1" height="1" fill="#ffffff"/><rect x="6" y="14" width="2" height="1" fill="#4898d8"/><rect x="8" y="14" width="1" height="1" fill="#ffffff"/><rect x="9" y="14" width="2" height="1" fill="#e0e0e0"/><rect x="11" y="14" width="1" height="1" fill="#5888f0"/><rect x="12" y="14" width="2" height="1" fill="#e0e0e0"/><rect x="14" y="14" width="1" height="1" fill="#800000"/><rect x="15" y="14" width="1" height="1" fill="#e02010"/><rect x="16" y="14" width="1" height="1" fill="#e0e0e0"/><rect x="17" y="14" width="1" height="1" fill="#e02010"/><rect x="18" y="14" width="1" height="1" fill="#b8b0b0"/><rect x="5" y="15" width="7" height="1" fill="#ffffff"/><rect x="12" y="15" width="1" height="1" fill="#5888f0"/><rect x="13" y="15" width="1" height="1" fill="#ffffff"/><rect x="14" y="15" width="1" height="1" fill="#800000"/><rect x="15" y="15" width="2" height="1" fill="#e02010"/><rect x="17" y="15" width="1" height="1" fill="#ffffff"/><rect x="18" y="15" width="1" height="1" fill="#b8b0b0"/><rect x="5" y="16" width="1" height="1" fill="#ffffff"/><rect x="6" y="16" width="2" height="1" fill="#4898d8"/><rect x="8" y="16" width="1" height="1" fill="#ffffff"/><rect x="9" y="16" width="4" height="1" fill="#e0e0e0"/><rect x="13" y="16" width="1" height="1" fill="#5888f0"/><rect x="14" y="16" width="4" height="1" fill="#800000"/><rect x="18" y="16" width="1" height="1" fill="#b8b0b0"/><rect x="5" y="17" width="13" height="1" fill="#ffffff"/><rect x="18" y="17" width="1" height="1" fill="#b8b0b0"/><rect x="6" y="18" width="13" height="1" fill="#b8b0b0"/></svg>
<div class="a" style="left:346px;top:24px;width:1px;height:18px;background:#d4c0b0;"></div>
<div class="t" style="left:375px;top:27px;"><span class="s">Перейти</span></div>
<svg class="a" style="left:422px;top:32px;" width="5" height="3" viewBox="0 0 5 3" shape-rendering="crispEdges"><path d="M0 0h5v1h-1v1h-1v1h-1v-1h-1v-1h-1z" fill="#000"/></svg>
<div class="a" style="left:433px;top:24px;width:1px;height:18px;background:#d4c0b0;"></div>
<svg class="a" style="left:439px;top:25px" width="16" height="16" shape-rendering="crispEdges"><rect x="2" y="0" width="12" height="1" fill="#b4a8a8"/><rect x="1" y="1" width="1" height="1" fill="#b4a8a8"/><rect x="2" y="1" width="12" height="1" fill="#fcfcd0"/><rect x="14" y="1" width="1" height="1" fill="#b4a8a8"/><rect x="0" y="2" width="1" height="1" fill="#b4a8a8"/><rect x="1" y="2" width="14" height="1" fill="#fcfcd0"/><rect x="15" y="2" width="1" height="1" fill="#b4a8a8"/><rect x="0" y="3" width="1" height="1" fill="#b4a8a8"/><rect x="1" y="3" width="5" height="1" fill="#fcfcd0"/><rect x="6" y="3" width="4" height="1" fill="#000090"/><rect x="10" y="3" width="5" height="1" fill="#fcfcd0"/><rect x="15" y="3" width="1" height="1" fill="#b4a8a8"/><rect x="0" y="4" width="1" height="1" fill="#b4a8a8"/><rect x="1" y="4" width="4" height="1" fill="#fcfcd0"/><rect x="5" y="4" width="2" height="1" fill="#000090"/><rect x="7" y="4" width="2" height="1" fill="#fcfcd0"/><rect x="9" y="4" width="2" height="1" fill="#000090"/><rect x="11" y="4" width="4" height="1" fill="#fcfcd0"/><rect x="15" y="4" width="1" height="1" fill="#b4a8a8"/><rect x="0" y="5" width="1" height="1" fill="#b4a8a8"/><rect x="1" y="5" width="4" height="1" fill="#fcfcd0"/><rect x="5" y="5" width="2" height="1" fill="#000090"/><rect x="7" y="5" width="2" height="1" fill="#fcfcd0"/><rect x="9" y="5" width="2" height="1" fill="#000090"/><rect x="11" y="5" width="4" height="1" fill="#fcfcd0"/><rect x="15" y="5" width="1" height="1" fill="#b4a8a8"/><rect x="0" y="6" width="1" height="1" fill="#b4a8a8"/><rect x="1" y="6" width="8" height="1" fill="#fcfcd0"/><rect x="9" y="6" width="2" height="1" fill="#000090"/><rect x="11" y="6" width="4" height="1" fill="#fcfcd0"/><rect x="15" y="6" width="1" height="1" fill="#b4a8a8"/><rect x="0" y="7" width="1" height="1" fill="#b4a8a8"/><rect x="1" y="7" width="7" height="1" fill="#fcfcd0"/><rect x="8" y="7" width="2" height="1" fill="#000090"/><rect x="10" y="7" width="5" height="1" fill="#fcfcd0"/><rect x="15" y="7" width="1" height="1" fill="#b4a8a8"/><rect x="0" y="8" width="1" height="1" fill="#b4a8a8"/><rect x="1" y="8" width="6" height="1" fill="#fcfcd0"/><rect x="7" y="8" width="2" height="1" fill="#000090"/><rect x="9" y="8" width="6" height="1" fill="#fcfcd0"/><rect x="15" y="8" width="1" height="1" fill="#b4a8a8"/><rect x="0" y="9" width="1" height="1" fill="#b4a8a8"/><rect x="1" y="9" width="6" height="1" fill="#fcfcd0"/><rect x="7" y="9" width="2" height="1" fill="#000090"/><rect x="9" y="9" width="6" height="1" fill="#fcfcd0"/><rect x="15" y="9" width="1" height="1" fill="#b4a8a8"/><rect x="0" y="10" width="1" height="1" fill="#b4a8a8"/><rect x="1" y="10" width="14" height="1" fill="#fcfcd0"/><rect x="15" y="10" width="1" height="1" fill="#b4a8a8"/><rect x="0" y="11" width="1" height="1" fill="#b4a8a8"/><rect x="1" y="11" width="6" height="1" fill="#fcfcd0"/><rect x="7" y="11" width="2" height="1" fill="#000090"/><rect x="9" y="11" width="6" height="1" fill="#fcfcd0"/><rect x="15" y="11" width="1" height="1" fill="#b4a8a8"/><rect x="0" y="12" width="1" height="1" fill="#b4a8a8"/><rect x="1" y="12" width="6" height="1" fill="#fcfcd0"/><rect x="7" y="12" width="2" height="1" fill="#000090"/><rect x="9" y="12" width="6" height="1" fill="#fcfcd0"/><rect x="15" y="12" width="1" height="1" fill="#b4a8a8"/><rect x="0" y="13" width="1" height="1" fill="#b4a8a8"/><rect x="1" y="13" width="14" height="1" fill="#fcfcd0"/><rect x="15" y="13" width="1" height="1" fill="#b4a8a8"/><rect x="1" y="14" width="1" height="1" fill="#b4a8a8"/><rect x="2" y="14" width="12" height="1" fill="#fcfcd0"/><rect x="14" y="14" width="1" height="1" fill="#b4a8a8"/><rect x="2" y="15" width="12" height="1" fill="#b4a8a8"/></svg>
<div class="a" style="left:461px;top:24px;width:1px;height:18px;background:#d4c0b0;"></div>
<div class="t" style="left:467px;top:27px;"><span class="s">Отчет</span></div>
<div class="a" style="left:11px;top:54px;width:160px;height:280px;border:1px solid #8c7c64;background:#fdf9fd;"></div>
<div class="clip" style="left:0;top:0;width:156px;height:319px">
<svg class="a" style="left:21px;top:58px;" width="9" height="9" viewBox="0 0 9 9" shape-rendering="crispEdges"><rect x="0.5" y="0.5" width="8" height="8" fill="#fff" stroke="#000"/><path d="M2 4h5v1h-5z" fill="#000"/></svg>
<svg class="a" style="left:31px;top:62px;" width="5" height="1" viewBox="0 0 5 1" shape-rendering="crispEdges"><rect x="0" y="0" width="1" height="1" fill="#000"/><rect x="2" y="0" width="1" height="1" fill="#000"/><rect x="4" y="0" width="1" height="1" fill="#000"/></svg>
<svg class="a" style="left:36px;top:57px" width="14" height="11" shape-rendering="crispEdges"><rect x="1" y="0" width="4" height="1" fill="#f8f480"/><rect x="0" y="1" width="1" height="1" fill="#f8f480"/><rect x="1" y="1" width="4" height="1" fill="#d4c88c"/><rect x="5" y="1" width="1" height="1" fill="#f8f480"/><rect x="0" y="2" width="1" height="1" fill="#f8f480"/><rect x="1" y="2" width="5" height="1" fill="#d4c88c"/><rect x="6" y="2" width="8" height="1" fill="#f8f480"/><rect x="0" y="3" width="1" height="1" fill="#f8f480"/><rect x="1" y="3" width="12" height="1" fill="#d4c88c"/><rect x="13" y="3" width="1" height="1" fill="#b8ac70"/><rect x="0" y="4" width="1" height="1" fill="#f8f480"/><rect x="1" y="4" width="12" height="1" fill="#d4c88c"/><rect x="13" y="4" width="1" height="1" fill="#b8ac70"/><rect x="0" y="5" width="1" height="1" fill="#f8f480"/><rect x="1" y="5" width="12" height="1" fill="#d4c88c"/><rect x="13" y="5" width="1" height="1" fill="#b8ac70"/><rect x="0" y="6" width="1" height="1" fill="#f8f480"/><rect x="1" y="6" width="12" height="1" fill="#d4c88c"/><rect x="13" y="6" width="1" height="1" fill="#b8ac70"/><rect x="0" y="7" width="1" height="1" fill="#f8f480"/><rect x="1" y="7" width="12" height="1" fill="#d4c88c"/><rect x="13" y="7" width="1" height="1" fill="#b8ac70"/><rect x="0" y="8" width="1" height="1" fill="#f8f480"/><rect x="1" y="8" width="12" height="1" fill="#d4c88c"/><rect x="13" y="8" width="1" height="1" fill="#b8ac70"/><rect x="0" y="9" width="1" height="1" fill="#f8f480"/><rect x="1" y="9" width="12" height="1" fill="#d4c88c"/><rect x="13" y="9" width="1" height="1" fill="#b8ac70"/><rect x="0" y="10" width="14" height="1" fill="#8c8040"/></svg>
<div class="t" style="left:55px;top:57px;letter-spacing:0.2px;"><span class="s">Контрагенты</span></div>
<svg class="a" style="left:44px;top:71px;" width="1" height="5" viewBox="0 0 1 5" shape-rendering="crispEdges"><rect x="0" y="0" width="1" height="1" fill="#000"/><rect x="0" y="2" width="1" height="1" fill="#000"/><rect x="0" y="4" width="1" height="1" fill="#000"/></svg>
<svg class="a" style="left:40px;top:76px;" width="9" height="9" viewBox="0 0 9 9" shape-rendering="crispEdges"><rect x="0.5" y="0.5" width="8" height="8" fill="#fff" stroke="#000"/><path d="M2 4h5v1h-5z" fill="#000"/><path d="M4 2h1v5h-1z" fill="#000"/></svg>
<svg class="a" style="left:50px;top:80px;" width="5" height="1" viewBox="0 0 5 1" shape-rendering="crispEdges"><rect x="0" y="0" width="1" height="1" fill="#000"/><rect x="2" y="0" width="1" height="1" fill="#000"/><rect x="4" y="0" width="1" height="1" fill="#000"/></svg>
<svg class="a" style="left:55px;top:74px" width="14" height="11" shape-rendering="crispEdges"><rect x="1" y="0" width="4" height="1" fill="#f8f480"/><rect x="0" y="1" width="1" height="1" fill="#f8f480"/><rect x="1" y="1" width="4" height="1" fill="#d4c88c"/><rect x="5" y="1" width="1" height="1" fill="#f8f480"/><rect x="0" y="2" width="1" height="1" fill="#f8f480"/><rect x="1" y="2" width="5" height="1" fill="#d4c88c"/><rect x="6" y="2" width="8" height="1" fill="#f8f480"/><rect x="0" y="3" width="1" height="1" fill="#f8f480"/><rect x="1" y="3" width="12" height="1" fill="#d4c88c"/><rect x="13" y="3" width="1" height="1" fill="#b8ac70"/><rect x="0" y="4" width="1" height="1" fill="#f8f480"/><rect x="1" y="4" width="12" height="1" fill="#d4c88c"/><rect x="13" y="4" width="1" height="1" fill="#b8ac70"/><rect x="0" y="5" width="1" height="1" fill="#f8f480"/><rect x="1" y="5" width="12" height="1" fill="#d4c88c"/><rect x="13" y="5" width="1" height="1" fill="#b8ac70"/><rect x="0" y="6" width="1" height="1" fill="#f8f480"/><rect x="1" y="6" width="12" height="1" fill="#d4c88c"/><rect x="13" y="6" width="1" height="1" fill="#b8ac70"/><rect x="0" y="7" width="1" height="1" fill="#f8f480"/><rect x="1" y="7" width="12" height="1" fill="#d4c88c"/><rect x="13" y="7" width="1" height="1" fill="#b8ac70"/><rect x="0" y="8" width="1" height="1" fill="#f8f480"/><rect x="1" y="8" width="12" height="1" fill="#d4c88c"/><rect x="13" y="8" width="1" height="1" fill="#b8ac70"/><rect x="0" y="9" width="1" height="1" fill="#f8f480"/><rect x="1" y="9" width="12" height="1" fill="#d4c88c"/><rect x="13" y="9" width="1" height="1" fill="#b8ac70"/><rect x="0" y="10" width="14" height="1" fill="#8c8040"/></svg>
<div class="t" style="left:74px;top:74px;letter-spacing:0.36px;"><span class="s">Физические лица</span></div>
<svg class="a" style="left:44px;top:86px;" width="1" height="5" viewBox="0 0 1 5" shape-rendering="crispEdges"><rect x="0" y="0" width="1" height="1" fill="#000"/><rect x="0" y="2" width="1" height="1" fill="#000"/><rect x="0" y="4" width="1" height="1" fill="#000"/></svg>
<svg class="a" style="left:40px;top:92px;" width="9" height="9" viewBox="0 0 9 9" shape-rendering="crispEdges"><rect x="0.5" y="0.5" width="8" height="8" fill="#fff" stroke="#000"/><path d="M2 4h5v1h-5z" fill="#000"/><path d="M4 2h1v5h-1z" fill="#000"/></svg>
<svg class="a" style="left:50px;top:96px;" width="5" height="1" viewBox="0 0 5 1" shape-rendering="crispEdges"><rect x="0" y="0" width="1" height="1" fill="#000"/><rect x="2" y="0" width="1" height="1" fill="#000"/><rect x="4" y="0" width="1" height="1" fill="#000"/></svg>
<svg class="a" style="left:55px;top:91px" width="14" height="11" shape-rendering="crispEdges"><rect x="1" y="0" width="4" height="1" fill="#f8f480"/><rect x="0" y="1" width="1" height="1" fill="#f8f480"/><rect x="1" y="1" width="4" height="1" fill="#d4c88c"/><rect x="5" y="1" width="1" height="1" fill="#f8f480"/><rect x="0" y="2" width="1" height="1" fill="#f8f480"/><rect x="1" y="2" width="5" height="1" fill="#d4c88c"/><rect x="6" y="2" width="8" height="1" fill="#f8f480"/><rect x="0" y="3" width="1" height="1" fill="#f8f480"/><rect x="1" y="3" width="12" height="1" fill="#d4c88c"/><rect x="13" y="3" width="1" height="1" fill="#b8ac70"/><rect x="0" y="4" width="1" height="1" fill="#f8f480"/><rect x="1" y="4" width="12" height="1" fill="#d4c88c"/><rect x="13" y="4" width="1" height="1" fill="#b8ac70"/><rect x="0" y="5" width="1" height="1" fill="#f8f480"/><rect x="1" y="5" width="12" height="1" fill="#d4c88c"/><rect x="13" y="5" width="1" height="1" fill="#b8ac70"/><rect x="0" y="6" width="1" height="1" fill="#f8f480"/><rect x="1" y="6" width="12" height="1" fill="#d4c88c"/><rect x="13" y="6" width="1" height="1" fill="#b8ac70"/><rect x="0" y="7" width="1" height="1" fill="#f8f480"/><rect x="1" y="7" width="12" height="1" fill="#d4c88c"/><rect x="13" y="7" width="1" height="1" fill="#b8ac70"/><rect x="0" y="8" width="1" height="1" fill="#f8f480"/><rect x="1" y="8" width="12" height="1" fill="#d4c88c"/><rect x="13" y="8" width="1" height="1" fill="#b8ac70"/><rect x="0" y="9" width="1" height="1" fill="#f8f480"/><rect x="1" y="9" width="12" height="1" fill="#d4c88c"/><rect x="13" y="9" width="1" height="1" fill="#b8ac70"/><rect x="0" y="10" width="14" height="1" fill="#8c8040"/></svg>
<div class="a" style="left:72px;top:89px;width:90px;height:17px;background:#0d0880;"></div>
<div class="t" style="left:74px;top:91px;color:#fff;letter-spacing:-0.1px;"><span class="s">Юридические лица</span></div>
</div>
<div class="a" style="left:156px;top:55px;width:1px;height:265px;background:#e8d8d0;"></div>
<div class="a" style="left:157px;top:55px;width:13px;height:265px;background:#fcf6ee;"></div>
<div class="a" style="left:158px;top:56px;width:11px;height:11px;border:1px solid #d8c8b8;background:#e9d9d3;"></div>
<svg class="a" style="left:160px;top:59px;" width="7" height="4" viewBox="0 0 7 4" shape-rendering="crispEdges"><path d="M3 0h1v1h1v1h1v1h1v1h-2v-1h-1v-1h-1v1h-1v1h-2v-1h1v-1h1v-1h1z" fill="#000"/></svg>
<div class="a" style="left:158px;top:182px;width:11px;height:11px;border:1px solid #c8b4a4;background:#e9d9d3;"></div>
<div class="a" style="left:158px;top:308px;width:11px;height:11px;border:1px solid #d8c8b8;background:#e9d9d3;"></div>
<svg class="a" style="left:160px;top:312px;" width="7" height="4" viewBox="0 0 7 4" shape-rendering="crispEdges"><path d="M0 0h2v1h1v1h1v-1h1v-1h2v1h-1v1h-1v1h-1v1h-1v-1h-1v-1h-1v-1h-1z" fill="#000"/></svg>
<div class="a" style="left:12px;top:319px;width:145px;height:1px;background:#e8d8d0;"></div>
<div class="a" style="left:12px;top:320px;width:145px;height:13px;background:#fcf6ee;"></div>
<div class="a" style="left:13px;top:321px;width:11px;height:11px;border:1px solid #d8c8b8;background:#e9d9d3;"></div>
<svg class="a" style="left:16px;top:323px;" width="4" height="7" viewBox="0 0 4 7" shape-rendering="crispEdges"><path d="M3 0h1v2h-1v1h-1v1h1v1h1v2h-1v-1h-1v-1h-1v-1h-1v-1h1v-1h1v-1h1z" fill="#000"/></svg>
<div class="a" style="left:25px;top:321px;width:106px;height:11px;border:1px solid #c8b4a4;background:#e9d9d3;"></div>
<div class="a" style="left:145px;top:321px;width:11px;height:11px;border:1px solid #d8c8b8;background:#e9d9d3;"></div>
<svg class="a" style="left:149px;top:323px;" width="4" height="7" viewBox="0 0 4 7" shape-rendering="crispEdges"><path d="M0 0h1v1h1v1h1v1h1v1h-1v1h-1v1h-1v1h-1v-2h1v-1h1v-1h-1v-1h-1z" fill="#000"/></svg>
<div class="a" style="left:157px;top:320px;width:13px;height:13px;background:#d8c8b8;"></div>
<div class="a" style="left:177px;top:54px;width:510px;height:280px;border:1px solid #8c7c64;background:#fdf9fd;"></div>
<div class="a" style="left:178px;top:55px;width:494px;height:14px;background:#e9d9d3;"></div>
<div class="a" style="left:250px;top:55px;width:148px;height:14px;background:#d8c8b8;"></div>
<div class="a" style="left:250px;top:55px;width:148px;height:1px;background:#e8dcd0;"></div>
<div class="a" style="left:250px;top:55px;width:1px;height:14px;background:#e8dcd0;"></div>
<div class="a" style="left:178px;top:69px;width:494px;height:1px;background:#8c7c64;"></div>
<div class="a" style="left:178px;top:70px;width:494px;height:16px;background:#ecdcd4;"></div>
<div class="a" style="left:178px;top:86px;width:494px;height:1px;background:#8c7c64;"></div>
<div class="a" style="left:250px;top:87px;width:148px;height:16px;background:#0d0880;"></div>
<div class="a" style="left:178px;top:103px;width:494px;height:1px;background:#8c7c64;"></div>
<div class="a" style="left:209px;top:55px;width:1px;height:278px;background:#8c7c64;"></div>
<div class="a" style="left:249px;top:55px;width:1px;height:278px;background:#8c7c64;"></div>
<div class="a" style="left:398px;top:55px;width:1px;height:278px;background:#8c7c64;"></div>
<div class="a" style="left:672px;top:55px;width:14px;height:278px;background:#fcf6ee;"></div>
<div class="a" style="left:672px;top:55px;width:1px;height:278px;background:#e8d8d0;"></div>
<div class="a" style="left:674px;top:56px;width:11px;height:11px;border:1px solid #d8c8b8;background:#e9d9d3;"></div>
<svg class="a" style="left:676px;top:59px;" width="7" height="4" viewBox="0 0 7 4" shape-rendering="crispEdges"><path d="M3 0h1v1h1v1h1v1h1v1h-2v-1h-1v-1h-1v1h-1v1h-2v-1h1v-1h1v-1h1z" fill="#000"/></svg>
<div class="t" style="left:211px;top:57px;"><span class="s">Код</span></div>
<div class="t" style="left:251px;top:57px;"><span class="s">Наименование</span></div>
<svg class="a" style="left:386px;top:61px;" width="5" height="3" viewBox="0 0 5 3" shape-rendering="crispEdges"><path d="M0 0h5v1h-1v1h-1v1h-1v-1h-1v-1h-1z" fill="#000"/></svg>
<div class="t" style="left:400px;top:57px;"><span class="s">Полное наименование</span></div>
<svg class="a" style="left:184px;top:73px" width="5" height="6" shape-rendering="crispEdges"><rect x="2" y="0" width="1" height="1" fill="#000"/><rect x="1" y="1" width="3" height="1" fill="#000"/><rect x="0" y="2" width="5" height="1" fill="#000"/><rect x="2" y="3" width="1" height="1" fill="#000"/><rect x="2" y="4" width="1" height="1" fill="#000"/><rect x="0" y="5" width="3" height="1" fill="#000"/></svg>
<svg class="a" style="left:194px;top:72px" width="14" height="11" shape-rendering="crispEdges"><rect x="1" y="0" width="4" height="1" fill="#f8f480"/><rect x="0" y="1" width="1" height="1" fill="#f8f480"/><rect x="1" y="1" width="4" height="1" fill="#d4c88c"/><rect x="5" y="1" width="1" height="1" fill="#f8f480"/><rect x="0" y="2" width="1" height="1" fill="#f8f480"/><rect x="1" y="2" width="5" height="1" fill="#d4c88c"/><rect x="6" y="2" width="8" height="1" fill="#f8f480"/><rect x="0" y="3" width="1" height="1" fill="#f8f480"/><rect x="1" y="3" width="12" height="1" fill="#d4c88c"/><rect x="13" y="3" width="1" height="1" fill="#b8ac70"/><rect x="0" y="4" width="1" height="1" fill="#f8f480"/><rect x="1" y="4" width="12" height="1" fill="#d4c88c"/><rect x="13" y="4" width="1" height="1" fill="#b8ac70"/><rect x="0" y="5" width="1" height="1" fill="#f8f480"/><rect x="1" y="5" width="12" height="1" fill="#d4c88c"/><rect x="13" y="5" width="1" height="1" fill="#b8ac70"/><rect x="0" y="6" width="1" height="1" fill="#f8f480"/><rect x="1" y="6" width="12" height="1" fill="#d4c88c"/><rect x="13" y="6" width="1" height="1" fill="#b8ac70"/><rect x="0" y="7" width="1" height="1" fill="#f8f480"/><rect x="1" y="7" width="12" height="1" fill="#d4c88c"/><rect x="13" y="7" width="1" height="1" fill="#b8ac70"/><rect x="0" y="8" width="1" height="1" fill="#f8f480"/><rect x="1" y="8" width="12" height="1" fill="#d4c88c"/><rect x="13" y="8" width="1" height="1" fill="#b8ac70"/><rect x="0" y="9" width="1" height="1" fill="#f8f480"/><rect x="1" y="9" width="12" height="1" fill="#d4c88c"/><rect x="13" y="9" width="1" height="1" fill="#b8ac70"/><rect x="0" y="10" width="14" height="1" fill="#8c8040"/></svg>
<svg class="a" style="left:213px;top:73px" width="30" height="9" shape-rendering="crispEdges"><rect x="1" y="0" width="3" height="1" fill="#000"/><rect x="7" y="0" width="3" height="1" fill="#000"/><rect x="13" y="0" width="3" height="1" fill="#000"/><rect x="19" y="0" width="3" height="1" fill="#000"/><rect x="25" y="0" width="3" height="1" fill="#000"/><rect x="0" y="1" width="1" height="1" fill="#000"/><rect x="4" y="1" width="1" height="1" fill="#000"/><rect x="6" y="1" width="1" height="1" fill="#000"/><rect x="10" y="1" width="1" height="1" fill="#000"/><rect x="12" y="1" width="1" height="1" fill="#000"/><rect x="16" y="1" width="1" height="1" fill="#000"/><rect x="18" y="1" width="1" height="1" fill="#000"/><rect x="22" y="1" width="1" height="1" fill="#000"/><rect x="24" y="1" width="1" height="1" fill="#000"/><rect x="28" y="1" width="1" height="1" fill="#000"/><rect x="0" y="2" width="1" height="1" fill="#000"/><rect x="4" y="2" width="1" height="1" fill="#000"/><rect x="6" y="2" width="1" height="1" fill="#000"/><rect x="10" y="2" width="1" height="1" fill="#000"/><rect x="12" y="2" width="1" height="1" fill="#000"/><rect x="16" y="2" width="1" height="1" fill="#000"/><rect x="18" y="2" width="1" height="1" fill="#000"/><rect x="22" y="2" width="1" height="1" fill="#000"/><rect x="24" y="2" width="1" height="1" fill="#000"/><rect x="28" y="2" width="1" height="1" fill="#000"/><rect x="0" y="3" width="1" height="1" fill="#000"/><rect x="4" y="3" width="1" height="1" fill="#000"/><rect x="6" y="3" width="1" height="1" fill="#000"/><rect x="10" y="3" width="1" height="1" fill="#000"/><rect x="12" y="3" width="1" height="1" fill="#000"/><rect x="16" y="3" width="1" height="1" fill="#000"/><rect x="18" y="3" width="1" height="1" fill="#000"/><rect x="22" y="3" width="1" height="1" fill="#000"/><rect x="24" y="3" width="1" height="1" fill="#000"/><rect x="28" y="3" width="1" height="1" fill="#000"/><rect x="0" y="4" width="1" height="1" fill="#000"/><rect x="4" y="4" width="1" height="1" fill="#000"/><rect x="6" y="4" width="1" height="1" fill="#000"/><rect x="10" y="4" width="1" height="1" fill="#000"/><rect x="12" y="4" width="1" height="1" fill="#000"/><rect x="16" y="4" width="1" height="1" fill="#000"/><rect x="18" y="4" width="1" height="1" fill="#000"/><rect x="22" y="4" width="1" height="1" fill="#000"/><rect x="25" y="4" width="3" height="1" fill="#000"/><rect x="0" y="5" width="1" height="1" fill="#000"/><rect x="4" y="5" width="1" height="1" fill="#000"/><rect x="6" y="5" width="1" height="1" fill="#000"/><rect x="10" y="5" width="1" height="1" fill="#000"/><rect x="12" y="5" width="1" height="1" fill="#000"/><rect x="16" y="5" width="1" height="1" fill="#000"/><rect x="18" y="5" width="1" height="1" fill="#000"/><rect x="22" y="5" width="1" height="1" fill="#000"/><rect x="24" y="5" width="1" height="1" fill="#000"/><rect x="28" y="5" width="1" height="1" fill="#000"/><rect x="0" y="6" width="1" height="1" fill="#000"/><rect x="4" y="6" width="1" height="1" fill="#000"/><rect x="6" y="6" width="1" height="1" fill="#000"/><rect x="10" y="6" width="1" height="1" fill="#000"/><rect x="12" y="6" width="1" height="1" fill="#000"/><rect x="16" y="6" width="1" height="1" fill="#000"/><rect x="18" y="6" width="1" height="1" fill="#000"/><rect x="22" y="6" width="1" height="1" fill="#000"/><rect x="24" y="6" width="1" height="1" fill="#000"/><rect x="28" y="6" width="1" height="1" fill="#000"/><rect x="0" y="7" width="1" height="1" fill="#000"/><rect x="4" y="7" width="1" height="1" fill="#000"/><rect x="6" y="7" width="1" height="1" fill="#000"/><rect x="10" y="7" width="1" height="1" fill="#000"/><rect x="12" y="7" width="1" height="1" fill="#000"/><rect x="16" y="7" width="1" height="1" fill="#000"/><rect x="18" y="7" width="1" height="1" fill="#000"/><rect x="22" y="7" width="1" height="1" fill="#000"/><rect x="24" y="7" width="1" height="1" fill="#000"/><rect x="28" y="7" width="1" height="1" fill="#000"/><rect x="1" y="8" width="3" height="1" fill="#000"/><rect x="7" y="8" width="3" height="1" fill="#000"/><rect x="13" y="8" width="3" height="1" fill="#000"/><rect x="19" y="8" width="3" height="1" fill="#000"/><rect x="25" y="8" width="3" height="1" fill="#000"/></svg>
<div class="t" style="left:252px;top:72px;letter-spacing:-0.27px;"><span class="s">Юридические лица</span></div>
<svg class="a" style="left:197px;top:93px;" width="9" height="3" viewBox="0 0 9 3" shape-rendering="crispEdges"><rect x="0" y="0" width="8" height="2" fill="#4878e8"/><rect x="1" y="2" width="8" height="1" fill="#9090a0"/><rect x="8" y="1" width="1" height="2" fill="#9090a0"/></svg>
<svg class="a" style="left:213px;top:90px" width="30" height="9" shape-rendering="crispEdges"><rect x="1" y="0" width="3" height="1" fill="#000"/><rect x="7" y="0" width="3" height="1" fill="#000"/><rect x="13" y="0" width="3" height="1" fill="#000"/><rect x="20" y="0" width="1" height="1" fill="#000"/><rect x="26" y="0" width="1" height="1" fill="#000"/><rect x="0" y="1" width="1" height="1" fill="#000"/><rect x="4" y="1" width="1" height="1" fill="#000"/><rect x="6" y="1" width="1" height="1" fill="#000"/><rect x="10" y="1" width="1" height="1" fill="#000"/><rect x="12" y="1" width="1" height="1" fill="#000"/><rect x="16" y="1" width="1" height="1" fill="#000"/><rect x="18" y="1" width="3" height="1" fill="#000"/><rect x="24" y="1" width="3" height="1" fill="#000"/><rect x="0" y="2" width="1" height="1" fill="#000"/><rect x="4" y="2" width="1" height="1" fill="#000"/><rect x="6" y="2" width="1" height="1" fill="#000"/><rect x="10" y="2" width="1" height="1" fill="#000"/><rect x="12" y="2" width="1" height="1" fill="#000"/><rect x="16" y="2" width="1" height="1" fill="#000"/><rect x="20" y="2" width="1" height="1" fill="#000"/><rect x="26" y="2" width="1" height="1" fill="#000"/><rect x="0" y="3" width="1" height="1" fill="#000"/><rect x="4" y="3" width="1" height="1" fill="#000"/><rect x="6" y="3" width="1" height="1" fill="#000"/><rect x="10" y="3" width="1" height="1" fill="#000"/><rect x="12" y="3" width="1" height="1" fill="#000"/><rect x="16" y="3" width="1" height="1" fill="#000"/><rect x="20" y="3" width="1" height="1" fill="#000"/><rect x="26" y="3" width="1" height="1" fill="#000"/><rect x="0" y="4" width="1" height="1" fill="#000"/><rect x="4" y="4" width="1" height="1" fill="#000"/><rect x="6" y="4" width="1" height="1" fill="#000"/><rect x="10" y="4" width="1" height="1" fill="#000"/><rect x="12" y="4" width="1" height="1" fill="#000"/><rect x="16" y="4" width="1" height="1" fill="#000"/><rect x="20" y="4" width="1" height="1" fill="#000"/><rect x="26" y="4" width="1" height="1" fill="#000"/><rect x="0" y="5" width="1" height="1" fill="#000"/><rect x="4" y="5" width="1" height="1" fill="#000"/><rect x="6" y="5" width="1" height="1" fill="#000"/><rect x="10" y="5" width="1" height="1" fill="#000"/><rect x="12" y="5" width="1" height="1" fill="#000"/><rect x="16" y="5" width="1" height="1" fill="#000"/><rect x="20" y="5" width="1" height="1" fill="#000"/><rect x="26" y="5" width="1" height="1" fill="#000"/><rect x="0" y="6" width="1" height="1" fill="#000"/><rect x="4" y="6" width="1" height="1" fill="#000"/><rect x="6" y="6" width="1" height="1" fill="#000"/><rect x="10" y="6" width="1" height="1" fill="#000"/><rect x="12" y="6" width="1" height="1" fill="#000"/><rect x="16" y="6" width="1" height="1" fill="#000"/><rect x="20" y="6" width="1" height="1" fill="#000"/><rect x="26" y="6" width="1" height="1" fill="#000"/><rect x="0" y="7" width="1" height="1" fill="#000"/><rect x="4" y="7" width="1" height="1" fill="#000"/><rect x="6" y="7" width="1" height="1" fill="#000"/><rect x="10" y="7" width="1" height="1" fill="#000"/><rect x="12" y="7" width="1" height="1" fill="#000"/><rect x="16" y="7" width="1" height="1" fill="#000"/><rect x="20" y="7" width="1" height="1" fill="#000"/><rect x="26" y="7" width="1" height="1" fill="#000"/><rect x="1" y="8" width="3" height="1" fill="#000"/><rect x="7" y="8" width="3" height="1" fill="#000"/><rect x="13" y="8" width="3" height="1" fill="#000"/><rect x="20" y="8" width="1" height="1" fill="#000"/><rect x="26" y="8" width="1" height="1" fill="#000"/></svg>
<div class="t" style="left:252px;top:89px;color:#fff;letter-spacing:0.2px;"><span class="s">ЗАО "Ларден"</span></div>
<div class="t" style="left:401px;top:89px;letter-spacing:0.27px;"><span class="s">ЗАО "Ларден"</span></div>
<div class="a" style="left:180px;top:104px;width:566px;height:367px;background:#3d70ee;"></div>
<div class="a" style="left:180px;top:104px;width:566px;height:1px;background:#68a0f4;"></div>
<div class="a" style="left:180px;top:104px;width:1px;height:367px;background:#68a0f4;"></div>
<div class="a" style="left:183px;top:126px;width:1px;height:343px;background:#4060b0;"></div>
<div class="a" style="left:742px;top:126px;width:1px;height:343px;background:#4060b0;"></div>
<div class="a" style="left:183px;top:126px;width:560px;height:1px;background:#4060b0;"></div>
<div class="a" style="left:183px;top:468px;width:560px;height:1px;background:#4060b0;"></div>
<svg class="a" style="left:184px;top:110px" width="16" height="12" shape-rendering="crispEdges"><rect x="2" y="0" width="6" height="1" fill="#b8a838"/><rect x="2" y="1" width="7" height="1" fill="#b8a838"/><rect x="2" y="2" width="14" height="1" fill="#b8a838"/><rect x="2" y="3" width="1" height="1" fill="#b8a838"/><rect x="3" y="3" width="12" height="1" fill="#e0d8a0"/><rect x="15" y="3" width="1" height="1" fill="#b8a838"/><rect x="2" y="4" width="1" height="1" fill="#b8a838"/><rect x="3" y="4" width="5" height="1" fill="#e0d8a0"/><rect x="8" y="4" width="5" height="1" fill="#9890a0"/><rect x="13" y="4" width="2" height="1" fill="#e0d8a0"/><rect x="15" y="4" width="1" height="1" fill="#b8a838"/><rect x="2" y="5" width="1" height="1" fill="#b8a838"/><rect x="3" y="5" width="8" height="1" fill="#e0d8a0"/><rect x="11" y="5" width="2" height="1" fill="#9890a0"/><rect x="13" y="5" width="2" height="1" fill="#e0d8a0"/><rect x="15" y="5" width="1" height="1" fill="#b8a838"/><rect x="2" y="6" width="1" height="1" fill="#b8a838"/><rect x="3" y="6" width="12" height="1" fill="#e0d8a0"/><rect x="15" y="6" width="1" height="1" fill="#b8a838"/><rect x="2" y="7" width="1" height="1" fill="#b8a838"/><rect x="3" y="7" width="1" height="1" fill="#e0d8a0"/><rect x="4" y="7" width="9" height="1" fill="#9890a0"/><rect x="13" y="7" width="2" height="1" fill="#e0d8a0"/><rect x="15" y="7" width="1" height="1" fill="#b8a838"/><rect x="2" y="8" width="1" height="1" fill="#b8a838"/><rect x="3" y="8" width="12" height="1" fill="#e0d8a0"/><rect x="15" y="8" width="1" height="1" fill="#b8a838"/><rect x="2" y="9" width="1" height="1" fill="#b8a838"/><rect x="3" y="9" width="1" height="1" fill="#e0d8a0"/><rect x="4" y="9" width="3" height="1" fill="#9890a0"/><rect x="7" y="9" width="2" height="1" fill="#e0d8a0"/><rect x="9" y="9" width="4" height="1" fill="#9890a0"/><rect x="13" y="9" width="2" height="1" fill="#e0d8a0"/><rect x="15" y="9" width="1" height="1" fill="#b8a838"/><rect x="2" y="10" width="1" height="1" fill="#b8a838"/><rect x="3" y="10" width="12" height="1" fill="#e0d8a0"/><rect x="15" y="10" width="1" height="1" fill="#b8a838"/><rect x="2" y="11" width="14" height="1" fill="#807020"/></svg>
<div class="t" style="left:205px;top:110px;color:#fff;font-weight:bold;font-size:12px;line-height:15px;">Контрагенты: Новый</div>
<svg class="a" style="left:333px;top:112px" width="4" height="3" shape-rendering="crispEdges"><rect x="0" y="0" width="4" height="1" fill="#fff"/><rect x="1" y="1" width="2" height="1" fill="#fff"/><rect x="0" y="2" width="4" height="1" fill="#fff"/></svg>
<div class="a" style="left:688px;top:120px;width:8px;height:2px;background:#fff;"></div>
<div class="a" style="left:706px;top:111px;width:11px;height:2px;background:#fff;"></div>
<div class="a" style="left:706px;top:111px;width:1px;height:11px;background:#fff;"></div>
<div class="a" style="left:716px;top:111px;width:1px;height:11px;background:#fff;"></div>
<div class="a" style="left:706px;top:121px;width:11px;height:1px;background:#fff;"></div>
<svg class="a" style="left:728px;top:112px" width="10" height="9" shape-rendering="crispEdges"><rect x="0" y="0" width="2" height="1" fill="#fff"/><rect x="8" y="0" width="2" height="1" fill="#fff"/><rect x="1" y="1" width="2" height="1" fill="#fff"/><rect x="7" y="1" width="2" height="1" fill="#fff"/><rect x="2" y="2" width="2" height="1" fill="#fff"/><rect x="6" y="2" width="2" height="1" fill="#fff"/><rect x="3" y="3" width="4" height="1" fill="#fff"/><rect x="4" y="4" width="2" height="1" fill="#fff"/><rect x="3" y="5" width="4" height="1" fill="#fff"/><rect x="2" y="6" width="2" height="1" fill="#fff"/><rect x="6" y="6" width="2" height="1" fill="#fff"/><rect x="1" y="7" width="2" height="1" fill="#fff"/><rect x="7" y="7" width="2" height="1" fill="#fff"/><rect x="0" y="8" width="2" height="1" fill="#fff"/><rect x="8" y="8" width="2" height="1" fill="#fff"/></svg>
<div class="a" style="left:184px;top:127px;width:558px;height:24px;background:#e9d9d3;"></div>
<div class="a" style="left:184px;top:127px;width:558px;height:1px;background:#fcf4ec;"></div>
<div class="a" style="left:184px;top:127px;width:1px;height:24px;background:#fcf4ec;"></div>
<div class="a" style="left:184px;top:151px;width:558px;height:1px;background:#8c7c64;"></div>
<div class="a" style="left:184px;top:152px;width:558px;height:291px;background:#fdf0eb;"></div>
<div class="a" style="left:184px;top:443px;width:558px;height:1px;background:#8c7c64;"></div>
<div class="a" style="left:184px;top:444px;width:558px;height:24px;background:#e9d9d3;"></div>
<div class="a" style="left:184px;top:127px;width:558px;height:1px;background:#f8ece4;"></div>
<div class="a" style="left:184px;top:127px;width:1px;height:341px;background:#f8ece4;"></div>
<div class="a" style="left:741px;top:127px;width:1px;height:341px;background:#f8ece4;"></div>
<div class="a" style="left:184px;top:467px;width:558px;height:1px;background:#f8ece4;"></div>
<div class="a" style="left:184px;top:151px;width:558px;height:1px;background:#8c7c64;"></div>
<div class="a" style="left:184px;top:443px;width:558px;height:1px;background:#8c7c64;"></div>
<div class="t" style="left:189px;top:133px;letter-spacing:0.29px;"><span class="s">Действия</span></div>
<svg class="a" style="left:242px;top:138px;" width="5" height="3" viewBox="0 0 5 3" shape-rendering="crispEdges"><path d="M0 0h5v1h-1v1h-1v1h-1v-1h-1v-1h-1z" fill="#000"/></svg>
<div class="a" style="left:253px;top:130px;width:1px;height:18px;background:#d4c0b0;"></div>
<svg class="a" style="left:256px;top:129px" width="20" height="19" shape-rendering="crispEdges"><rect x="3" y="2" width="12" height="1" fill="#c0b4b4"/><rect x="3" y="3" width="1" height="1" fill="#c0b4b4"/><rect x="4" y="3" width="2" height="1" fill="#98a8b8"/><rect x="6" y="3" width="1" height="1" fill="#dcd0d0"/><rect x="7" y="3" width="6" height="1" fill="#e8e0e0"/><rect x="13" y="3" width="1" height="1" fill="#dcd0d0"/><rect x="14" y="3" width="1" height="1" fill="#c0b4b4"/><rect x="15" y="3" width="1" height="1" fill="#b8acac"/><rect x="3" y="4" width="1" height="1" fill="#c0b4b4"/><rect x="4" y="4" width="10" height="1" fill="#dcd0d0"/><rect x="14" y="4" width="1" height="1" fill="#c0b4b4"/><rect x="15" y="4" width="1" height="1" fill="#b8acac"/><rect x="3" y="5" width="1" height="1" fill="#c0b4b4"/><rect x="4" y="5" width="2" height="1" fill="#98a8b8"/><rect x="6" y="5" width="1" height="1" fill="#dcd0d0"/><rect x="7" y="5" width="6" height="1" fill="#e8e0e0"/><rect x="13" y="5" width="1" height="1" fill="#dcd0d0"/><rect x="14" y="5" width="1" height="1" fill="#c0b4b4"/><rect x="15" y="5" width="1" height="1" fill="#b8acac"/><rect x="3" y="6" width="1" height="1" fill="#c0b4b4"/><rect x="4" y="6" width="10" height="1" fill="#dcd0d0"/><rect x="14" y="6" width="1" height="1" fill="#c0b4b4"/><rect x="15" y="6" width="1" height="1" fill="#b8acac"/><rect x="3" y="7" width="1" height="1" fill="#c0b4b4"/><rect x="4" y="7" width="2" height="1" fill="#98a8b8"/><rect x="6" y="7" width="1" height="1" fill="#dcd0d0"/><rect x="7" y="7" width="6" height="1" fill="#e8e0e0"/><rect x="13" y="7" width="1" height="1" fill="#dcd0d0"/><rect x="14" y="7" width="1" height="1" fill="#c0b4b4"/><rect x="15" y="7" width="1" height="1" fill="#b8acac"/><rect x="3" y="8" width="1" height="1" fill="#c0b4b4"/><rect x="4" y="8" width="8" height="1" fill="#dcd0d0"/><rect x="12" y="8" width="1" height="1" fill="#9c8ca8"/><rect x="13" y="8" width="1" height="1" fill="#dcd0d0"/><rect x="14" y="8" width="1" height="1" fill="#c0b4b4"/><rect x="15" y="8" width="1" height="1" fill="#b8acac"/><rect x="3" y="9" width="1" height="1" fill="#c0b4b4"/><rect x="4" y="9" width="2" height="1" fill="#98a8b8"/><rect x="6" y="9" width="1" height="1" fill="#dcd0d0"/><rect x="7" y="9" width="4" height="1" fill="#e8e0e0"/><rect x="11" y="9" width="2" height="1" fill="#9c8ca8"/><rect x="13" y="9" width="1" height="1" fill="#dcd0d0"/><rect x="14" y="9" width="1" height="1" fill="#c0b4b4"/><rect x="15" y="9" width="1" height="1" fill="#b8acac"/><rect x="3" y="10" width="1" height="1" fill="#c0b4b4"/><rect x="4" y="10" width="6" height="1" fill="#dcd0d0"/><rect x="10" y="10" width="9" height="1" fill="#9c8ca8"/><rect x="3" y="11" width="1" height="1" fill="#c0b4b4"/><rect x="4" y="11" width="2" height="1" fill="#98a8b8"/><rect x="6" y="11" width="1" height="1" fill="#dcd0d0"/><rect x="7" y="11" width="2" height="1" fill="#e8e0e0"/><rect x="9" y="11" width="10" height="1" fill="#9c8ca8"/><rect x="3" y="12" width="1" height="1" fill="#c0b4b4"/><rect x="4" y="12" width="6" height="1" fill="#dcd0d0"/><rect x="10" y="12" width="9" height="1" fill="#9c8ca8"/><rect x="3" y="13" width="1" height="1" fill="#c0b4b4"/><rect x="4" y="13" width="2" height="1" fill="#98a8b8"/><rect x="6" y="13" width="1" height="1" fill="#dcd0d0"/><rect x="7" y="13" width="4" height="1" fill="#e8e0e0"/><rect x="11" y="13" width="2" height="1" fill="#9c8ca8"/><rect x="13" y="13" width="1" height="1" fill="#dcd0d0"/><rect x="14" y="13" width="1" height="1" fill="#c0b4b4"/><rect x="15" y="13" width="1" height="1" fill="#b8acac"/><rect x="3" y="14" width="1" height="1" fill="#c0b4b4"/><rect x="4" y="14" width="8" height="1" fill="#dcd0d0"/><rect x="12" y="14" width="1" height="1" fill="#9c8ca8"/><rect x="13" y="14" width="1" height="1" fill="#dcd0d0"/><rect x="14" y="14" width="1" height="1" fill="#c0b4b4"/><rect x="15" y="14" width="1" height="1" fill="#b8acac"/><rect x="3" y="15" width="1" height="1" fill="#c0b4b4"/><rect x="4" y="15" width="2" height="1" fill="#98a8b8"/><rect x="6" y="15" width="1" height="1" fill="#dcd0d0"/><rect x="7" y="15" width="6" height="1" fill="#e8e0e0"/><rect x="13" y="15" width="1" height="1" fill="#dcd0d0"/><rect x="14" y="15" width="1" height="1" fill="#c0b4b4"/><rect x="15" y="15" width="1" height="1" fill="#b8acac"/><rect x="3" y="16" width="12" height="1" fill="#c0b4b4"/><rect x="15" y="16" width="1" height="1" fill="#b8acac"/><rect x="4" y="17" width="12" height="1" fill="#b8acac"/></svg>
<svg class="a" style="left:284px;top:129px" width="18" height="17" shape-rendering="crispEdges"><rect x="3" y="4" width="3" height="1" fill="#88b070"/><rect x="6" y="4" width="11" height="1" fill="#a8a8a8"/><rect x="3" y="5" width="3" height="1" fill="#88b070"/><rect x="6" y="5" width="11" height="1" fill="#a8a8a8"/><rect x="3" y="6" width="1" height="1" fill="#b0a8a8"/><rect x="4" y="6" width="12" height="1" fill="#e0d4d0"/><rect x="16" y="6" width="1" height="1" fill="#b0a8a8"/><rect x="3" y="7" width="1" height="1" fill="#b0a8a8"/><rect x="4" y="7" width="4" height="1" fill="#e0d4d0"/><rect x="8" y="7" width="2" height="1" fill="#9890b8"/><rect x="10" y="7" width="1" height="1" fill="#b08880"/><rect x="11" y="7" width="5" height="1" fill="#e0d4d0"/><rect x="16" y="7" width="1" height="1" fill="#b0a8a8"/><rect x="3" y="8" width="1" height="1" fill="#b0a8a8"/><rect x="4" y="8" width="5" height="1" fill="#e0d4d0"/><rect x="9" y="8" width="2" height="1" fill="#9890b8"/><rect x="11" y="8" width="1" height="1" fill="#b08880"/><rect x="12" y="8" width="4" height="1" fill="#e0d4d0"/><rect x="16" y="8" width="1" height="1" fill="#b0a8a8"/><rect x="3" y="9" width="1" height="1" fill="#b0a8a8"/><rect x="4" y="9" width="4" height="1" fill="#e0d4d0"/><rect x="8" y="9" width="1" height="1" fill="#9890b8"/><rect x="9" y="9" width="1" height="1" fill="#e0d4d0"/><rect x="10" y="9" width="1" height="1" fill="#9890b8"/><rect x="11" y="9" width="1" height="1" fill="#e0d4d0"/><rect x="12" y="9" width="1" height="1" fill="#b08880"/><rect x="13" y="9" width="3" height="1" fill="#e0d4d0"/><rect x="16" y="9" width="1" height="1" fill="#b0a8a8"/><rect x="3" y="10" width="1" height="1" fill="#b0a8a8"/><rect x="4" y="10" width="3" height="1" fill="#e0d4d0"/><rect x="7" y="10" width="1" height="1" fill="#9890b8"/><rect x="8" y="10" width="4" height="1" fill="#e0d4d0"/><rect x="12" y="10" width="1" height="1" fill="#b08880"/><rect x="13" y="10" width="3" height="1" fill="#e0d4d0"/><rect x="16" y="10" width="1" height="1" fill="#b0a8a8"/><rect x="3" y="11" width="1" height="1" fill="#b0a8a8"/><rect x="4" y="11" width="3" height="1" fill="#e0d4d0"/><rect x="7" y="11" width="1" height="1" fill="#9890b8"/><rect x="8" y="11" width="4" height="1" fill="#e0d4d0"/><rect x="12" y="11" width="1" height="1" fill="#b08880"/><rect x="13" y="11" width="3" height="1" fill="#e0d4d0"/><rect x="16" y="11" width="1" height="1" fill="#b0a8a8"/><rect x="3" y="12" width="1" height="1" fill="#b0a8a8"/><rect x="4" y="12" width="3" height="1" fill="#e0d4d0"/><rect x="7" y="12" width="1" height="1" fill="#9890b8"/><rect x="8" y="12" width="3" height="1" fill="#e0d4d0"/><rect x="11" y="12" width="1" height="1" fill="#b08880"/><rect x="12" y="12" width="4" height="1" fill="#e0d4d0"/><rect x="16" y="12" width="1" height="1" fill="#b0a8a8"/><rect x="3" y="13" width="1" height="1" fill="#b0a8a8"/><rect x="4" y="13" width="3" height="1" fill="#e0d4d0"/><rect x="7" y="13" width="1" height="1" fill="#9890b8"/><rect x="8" y="13" width="2" height="1" fill="#e0d4d0"/><rect x="10" y="13" width="2" height="1" fill="#b08880"/><rect x="12" y="13" width="4" height="1" fill="#e0d4d0"/><rect x="16" y="13" width="1" height="1" fill="#b0a8a8"/><rect x="3" y="14" width="1" height="1" fill="#b0a8a8"/><rect x="4" y="14" width="4" height="1" fill="#e0d4d0"/><rect x="8" y="14" width="1" height="1" fill="#9890b8"/><rect x="9" y="14" width="1" height="1" fill="#e0d4d0"/><rect x="10" y="14" width="3" height="1" fill="#b08880"/><rect x="13" y="14" width="3" height="1" fill="#e0d4d0"/><rect x="16" y="14" width="1" height="1" fill="#b0a8a8"/><rect x="3" y="15" width="6" height="1" fill="#b0a8a8"/><rect x="9" y="15" width="1" height="1" fill="#9890b8"/><rect x="10" y="15" width="7" height="1" fill="#b0a8a8"/></svg>
<svg class="a" style="left:306px;top:129px" width="20" height="19" shape-rendering="crispEdges"><rect x="3" y="2" width="8" height="1" fill="#a09088"/><rect x="3" y="3" width="1" height="1" fill="#a09088"/><rect x="4" y="3" width="7" height="1" fill="#ffffff"/><rect x="11" y="3" width="1" height="1" fill="#a09088"/><rect x="3" y="4" width="1" height="1" fill="#a09088"/><rect x="4" y="4" width="8" height="1" fill="#ffffff"/><rect x="12" y="4" width="1" height="1" fill="#a09088"/><rect x="3" y="5" width="1" height="1" fill="#a09088"/><rect x="4" y="5" width="5" height="1" fill="#ffffff"/><rect x="9" y="5" width="10" height="1" fill="#a09088"/><rect x="3" y="6" width="1" height="1" fill="#a09088"/><rect x="4" y="6" width="5" height="1" fill="#ffffff"/><rect x="9" y="6" width="1" height="1" fill="#a09088"/><rect x="10" y="6" width="7" height="1" fill="#ffffff"/><rect x="17" y="6" width="2" height="1" fill="#a09088"/><rect x="3" y="7" width="1" height="1" fill="#a09088"/><rect x="4" y="7" width="5" height="1" fill="#ffffff"/><rect x="9" y="7" width="1" height="1" fill="#a09088"/><rect x="10" y="7" width="8" height="1" fill="#ffffff"/><rect x="18" y="7" width="1" height="1" fill="#a09088"/><rect x="3" y="8" width="1" height="1" fill="#a09088"/><rect x="4" y="8" width="5" height="1" fill="#ffffff"/><rect x="9" y="8" width="1" height="1" fill="#a09088"/><rect x="10" y="8" width="8" height="1" fill="#ffffff"/><rect x="18" y="8" width="1" height="1" fill="#a09088"/><rect x="3" y="9" width="1" height="1" fill="#a09088"/><rect x="4" y="9" width="2" height="1" fill="#2020d0"/><rect x="6" y="9" width="3" height="1" fill="#ffffff"/><rect x="9" y="9" width="1" height="1" fill="#a09088"/><rect x="10" y="9" width="2" height="1" fill="#ffffff"/><rect x="12" y="9" width="1" height="1" fill="#2020d0"/><rect x="13" y="9" width="5" height="1" fill="#ffffff"/><rect x="18" y="9" width="1" height="1" fill="#a09088"/><rect x="3" y="10" width="1" height="1" fill="#a09088"/><rect x="4" y="10" width="3" height="1" fill="#2020d0"/><rect x="7" y="10" width="2" height="1" fill="#ffffff"/><rect x="9" y="10" width="1" height="1" fill="#a09088"/><rect x="10" y="10" width="2" height="1" fill="#ffffff"/><rect x="12" y="10" width="2" height="1" fill="#2020d0"/><rect x="14" y="10" width="4" height="1" fill="#ffffff"/><rect x="18" y="10" width="1" height="1" fill="#a09088"/><rect x="3" y="11" width="1" height="1" fill="#a09088"/><rect x="4" y="11" width="1" height="1" fill="#ffffff"/><rect x="5" y="11" width="3" height="1" fill="#2020d0"/><rect x="8" y="11" width="1" height="1" fill="#ffffff"/><rect x="9" y="11" width="1" height="1" fill="#a09088"/><rect x="10" y="11" width="2" height="1" fill="#ffffff"/><rect x="12" y="11" width="3" height="1" fill="#2020d0"/><rect x="15" y="11" width="3" height="1" fill="#ffffff"/><rect x="18" y="11" width="1" height="1" fill="#a09088"/><rect x="3" y="12" width="1" height="1" fill="#a09088"/><rect x="4" y="12" width="2" height="1" fill="#ffffff"/><rect x="6" y="12" width="10" height="1" fill="#2020d0"/><rect x="16" y="12" width="2" height="1" fill="#ffffff"/><rect x="18" y="12" width="1" height="1" fill="#a09088"/><rect x="3" y="13" width="1" height="1" fill="#a09088"/><rect x="4" y="13" width="3" height="1" fill="#ffffff"/><rect x="7" y="13" width="10" height="1" fill="#2020d0"/><rect x="17" y="13" width="1" height="1" fill="#ffffff"/><rect x="18" y="13" width="1" height="1" fill="#a09088"/><rect x="3" y="14" width="7" height="1" fill="#a09088"/><rect x="10" y="14" width="2" height="1" fill="#ffffff"/><rect x="12" y="14" width="4" height="1" fill="#2020d0"/><rect x="16" y="14" width="2" height="1" fill="#ffffff"/><rect x="18" y="14" width="1" height="1" fill="#a09088"/><rect x="9" y="15" width="1" height="1" fill="#a09088"/><rect x="10" y="15" width="2" height="1" fill="#ffffff"/><rect x="12" y="15" width="3" height="1" fill="#2020d0"/><rect x="15" y="15" width="3" height="1" fill="#ffffff"/><rect x="18" y="15" width="1" height="1" fill="#a09088"/><rect x="9" y="16" width="1" height="1" fill="#a09088"/><rect x="10" y="16" width="8" height="1" fill="#ffffff"/><rect x="18" y="16" width="1" height="1" fill="#a09088"/><rect x="9" y="17" width="10" height="1" fill="#a09088"/></svg>
<div class="a" style="left:281px;top:130px;width:1px;height:18px;background:#d4c0b0;"></div>
<div class="t" style="left:331px;top:133px;"><span class="s">Перейти</span></div>
<svg class="a" style="left:379px;top:138px;" width="5" height="3" viewBox="0 0 5 3" shape-rendering="crispEdges"><path d="M0 0h5v1h-1v1h-1v1h-1v-1h-1v-1h-1z" fill="#000"/></svg>
<div class="a" style="left:390px;top:130px;width:1px;height:18px;background:#d4c0b0;"></div>
<svg class="a" style="left:396px;top:131px" width="16" height="16" shape-rendering="crispEdges"><rect x="2" y="0" width="12" height="1" fill="#b4a8a8"/><rect x="1" y="1" width="1" height="1" fill="#b4a8a8"/><rect x="2" y="1" width="12" height="1" fill="#fcfcd0"/><rect x="14" y="1" width="1" height="1" fill="#b4a8a8"/><rect x="0" y="2" width="1" height="1" fill="#b4a8a8"/><rect x="1" y="2" width="14" height="1" fill="#fcfcd0"/><rect x="15" y="2" width="1" height="1" fill="#b4a8a8"/><rect x="0" y="3" width="1" height="1" fill="#b4a8a8"/><rect x="1" y="3" width="5" height="1" fill="#fcfcd0"/><rect x="6" y="3" width="4" height="1" fill="#000090"/><rect x="10" y="3" width="5" height="1" fill="#fcfcd0"/><rect x="15" y="3" width="1" height="1" fill="#b4a8a8"/><rect x="0" y="4" width="1" height="1" fill="#b4a8a8"/><rect x="1" y="4" width="4" height="1" fill="#fcfcd0"/><rect x="5" y="4" width="2" height="1" fill="#000090"/><rect x="7" y="4" width="2" height="1" fill="#fcfcd0"/><rect x="9" y="4" width="2" height="1" fill="#000090"/><rect x="11" y="4" width="4" height="1" fill="#fcfcd0"/><rect x="15" y="4" width="1" height="1" fill="#b4a8a8"/><rect x="0" y="5" width="1" height="1" fill="#b4a8a8"/><rect x="1" y="5" width="4" height="1" fill="#fcfcd0"/><rect x="5" y="5" width="2" height="1" fill="#000090"/><rect x="7" y="5" width="2" height="1" fill="#fcfcd0"/><rect x="9" y="5" width="2" height="1" fill="#000090"/><rect x="11" y="5" width="4" height="1" fill="#fcfcd0"/><rect x="15" y="5" width="1" height="1" fill="#b4a8a8"/><rect x="0" y="6" width="1" height="1" fill="#b4a8a8"/><rect x="1" y="6" width="8" height="1" fill="#fcfcd0"/><rect x="9" y="6" width="2" height="1" fill="#000090"/><rect x="11" y="6" width="4" height="1" fill="#fcfcd0"/><rect x="15" y="6" width="1" height="1" fill="#b4a8a8"/><rect x="0" y="7" width="1" height="1" fill="#b4a8a8"/><rect x="1" y="7" width="7" height="1" fill="#fcfcd0"/><rect x="8" y="7" width="2" height="1" fill="#000090"/><rect x="10" y="7" width="5" height="1" fill="#fcfcd0"/><rect x="15" y="7" width="1" height="1" fill="#b4a8a8"/><rect x="0" y="8" width="1" height="1" fill="#b4a8a8"/><rect x="1" y="8" width="6" height="1" fill="#fcfcd0"/><rect x="7" y="8" width="2" height="1" fill="#000090"/><rect x="9" y="8" width="6" height="1" fill="#fcfcd0"/><rect x="15" y="8" width="1" height="1" fill="#b4a8a8"/><rect x="0" y="9" width="1" height="1" fill="#b4a8a8"/><rect x="1" y="9" width="6" height="1" fill="#fcfcd0"/><rect x="7" y="9" width="2" height="1" fill="#000090"/><rect x="9" y="9" width="6" height="1" fill="#fcfcd0"/><rect x="15" y="9" width="1" height="1" fill="#b4a8a8"/><rect x="0" y="10" width="1" height="1" fill="#b4a8a8"/><rect x="1" y="10" width="14" height="1" fill="#fcfcd0"/><rect x="15" y="10" width="1" height="1" fill="#b4a8a8"/><rect x="0" y="11" width="1" height="1" fill="#b4a8a8"/><rect x="1" y="11" width="6" height="1" fill="#fcfcd0"/><rect x="7" y="11" width="2" height="1" fill="#000090"/><rect x="9" y="11" width="6" height="1" fill="#fcfcd0"/><rect x="15" y="11" width="1" height="1" fill="#b4a8a8"/><rect x="0" y="12" width="1" height="1" fill="#b4a8a8"/><rect x="1" y="12" width="6" height="1" fill="#fcfcd0"/><rect x="7" y="12" width="2" height="1" fill="#000090"/><rect x="9" y="12" width="6" height="1" fill="#fcfcd0"/><rect x="15" y="12" width="1" height="1" fill="#b4a8a8"/><rect x="0" y="13" width="1" height="1" fill="#b4a8a8"/><rect x="1" y="13" width="14" height="1" fill="#fcfcd0"/><rect x="15" y="13" width="1" height="1" fill="#b4a8a8"/><rect x="1" y="14" width="1" height="1" fill="#b4a8a8"/><rect x="2" y="14" width="12" height="1" fill="#fcfcd0"/><rect x="14" y="14" width="1" height="1" fill="#b4a8a8"/><rect x="2" y="15" width="12" height="1" fill="#b4a8a8"/></svg>
<div class="a" style="left:418px;top:130px;width:1px;height:18px;background:#d4c0b0;"></div>
<div class="t" style="left:424px;top:133px;"><span class="s">Отчет</span></div>
<div class="t" style="left:192px;top:164px;"><span class="s">Наименование:</span></div>
<div class="a" style="left:278px;top:160px;width:373px;height:19px;border:1px solid #8c7c64;background:#fdf9fd;"></div>
<div class="t" style="left:281px;top:164px;"><span class="s">Булочкин Петр Иванович</span></div>
<div class="t" style="left:661px;top:164px;"><span class="s">Код:</span></div>
<div class="a" style="left:694px;top:160px;width:40px;height:19px;border:1px solid #8c7c64;background:#fdf9fd;"></div>
<svg class="a" style="left:698px;top:165px" width="30" height="9" shape-rendering="crispEdges"><rect x="1" y="0" width="3" height="1" fill="#000"/><rect x="7" y="0" width="3" height="1" fill="#000"/><rect x="13" y="0" width="3" height="1" fill="#000"/><rect x="20" y="0" width="1" height="1" fill="#000"/><rect x="25" y="0" width="3" height="1" fill="#000"/><rect x="0" y="1" width="1" height="1" fill="#000"/><rect x="4" y="1" width="1" height="1" fill="#000"/><rect x="6" y="1" width="1" height="1" fill="#000"/><rect x="10" y="1" width="1" height="1" fill="#000"/><rect x="12" y="1" width="1" height="1" fill="#000"/><rect x="16" y="1" width="1" height="1" fill="#000"/><rect x="18" y="1" width="3" height="1" fill="#000"/><rect x="24" y="1" width="1" height="1" fill="#000"/><rect x="28" y="1" width="1" height="1" fill="#000"/><rect x="0" y="2" width="1" height="1" fill="#000"/><rect x="4" y="2" width="1" height="1" fill="#000"/><rect x="6" y="2" width="1" height="1" fill="#000"/><rect x="10" y="2" width="1" height="1" fill="#000"/><rect x="12" y="2" width="1" height="1" fill="#000"/><rect x="16" y="2" width="1" height="1" fill="#000"/><rect x="20" y="2" width="1" height="1" fill="#000"/><rect x="28" y="2" width="1" height="1" fill="#000"/><rect x="0" y="3" width="1" height="1" fill="#000"/><rect x="4" y="3" width="1" height="1" fill="#000"/><rect x="6" y="3" width="1" height="1" fill="#000"/><rect x="10" y="3" width="1" height="1" fill="#000"/><rect x="12" y="3" width="1" height="1" fill="#000"/><rect x="16" y="3" width="1" height="1" fill="#000"/><rect x="20" y="3" width="1" height="1" fill="#000"/><rect x="27" y="3" width="1" height="1" fill="#000"/><rect x="0" y="4" width="1" height="1" fill="#000"/><rect x="4" y="4" width="1" height="1" fill="#000"/><rect x="6" y="4" width="1" height="1" fill="#000"/><rect x="10" y="4" width="1" height="1" fill="#000"/><rect x="12" y="4" width="1" height="1" fill="#000"/><rect x="16" y="4" width="1" height="1" fill="#000"/><rect x="20" y="4" width="1" height="1" fill="#000"/><rect x="26" y="4" width="1" height="1" fill="#000"/><rect x="0" y="5" width="1" height="1" fill="#000"/><rect x="4" y="5" width="1" height="1" fill="#000"/><rect x="6" y="5" width="1" height="1" fill="#000"/><rect x="10" y="5" width="1" height="1" fill="#000"/><rect x="12" y="5" width="1" height="1" fill="#000"/><rect x="16" y="5" width="1" height="1" fill="#000"/><rect x="20" y="5" width="1" height="1" fill="#000"/><rect x="25" y="5" width="1" height="1" fill="#000"/><rect x="0" y="6" width="1" height="1" fill="#000"/><rect x="4" y="6" width="1" height="1" fill="#000"/><rect x="6" y="6" width="1" height="1" fill="#000"/><rect x="10" y="6" width="1" height="1" fill="#000"/><rect x="12" y="6" width="1" height="1" fill="#000"/><rect x="16" y="6" width="1" height="1" fill="#000"/><rect x="20" y="6" width="1" height="1" fill="#000"/><rect x="24" y="6" width="1" height="1" fill="#000"/><rect x="0" y="7" width="1" height="1" fill="#000"/><rect x="4" y="7" width="1" height="1" fill="#000"/><rect x="6" y="7" width="1" height="1" fill="#000"/><rect x="10" y="7" width="1" height="1" fill="#000"/><rect x="12" y="7" width="1" height="1" fill="#000"/><rect x="16" y="7" width="1" height="1" fill="#000"/><rect x="20" y="7" width="1" height="1" fill="#000"/><rect x="24" y="7" width="1" height="1" fill="#000"/><rect x="1" y="8" width="3" height="1" fill="#000"/><rect x="7" y="8" width="3" height="1" fill="#000"/><rect x="13" y="8" width="3" height="1" fill="#000"/><rect x="20" y="8" width="1" height="1" fill="#000"/><rect x="24" y="8" width="5" height="1" fill="#000"/></svg>
<div class="a" style="left:192px;top:206px;width:542px;height:205px;border:1px solid #8c7c64;"></div>
<div class="a" style="left:240px;top:190px;width:161px;height:16px;background:#ecdcd4;"></div>
<div class="a" style="left:240px;top:190px;width:161px;height:1px;background:#8c7c64;"></div>
<div class="a" style="left:240px;top:191px;width:160px;height:1px;background:#f8ece8;"></div>
<div class="a" style="left:240px;top:191px;width:1px;height:15px;background:#f8ece8;"></div>
<div class="a" style="left:300px;top:190px;width:1px;height:16px;background:#8c7c64;"></div>
<div class="a" style="left:301px;top:191px;width:1px;height:15px;background:#f8ece8;"></div>
<div class="a" style="left:401px;top:190px;width:1px;height:16px;background:#8c7c64;"></div>
<div class="t" style="left:245px;top:193px;color:#948c88;letter-spacing:0.29px;"><span class="s">Контакты</span></div>
<div class="t" style="left:305px;top:193px;color:#948c88;"><span class="s">Счета и договоры</span></div>
<div class="a" style="left:193px;top:189px;width:46px;height:18px;background:#fdf0eb;"></div>
<div class="a" style="left:193px;top:189px;width:46px;height:1px;background:#8c7c64;"></div>
<div class="a" style="left:192px;top:190px;width:1px;height:17px;background:#8c7c64;"></div>
<div class="a" style="left:239px;top:190px;width:1px;height:16px;background:#8c7c64;"></div>
<div class="t" style="left:198px;top:193px;"><span class="s">Общие</span></div>
<div class="t" style="left:199px;top:217px;letter-spacing:-0.13px;"><span class="s">Юр. / физ. лицо:</span></div>
<div class="t" style="left:199px;top:241px;"><span class="s">Группа контрагентов:</span></div>
<div class="a" style="left:324px;top:237px;width:403px;height:19px;border:1px solid #8c7c64;background:#fdf9fd;"></div>
<div class="a" style="left:698px;top:237px;width:15px;height:19px;border:1px solid #8c7c64;background:#e9d9d3;"></div>
<div class="a" style="left:712px;top:237px;width:15px;height:19px;border:1px solid #8c7c64;background:#e9d9d3;"></div>
<svg class="a" style="left:702px;top:248px;" width="8" height="2" viewBox="0 0 8 2" shape-rendering="crispEdges"><rect x="0" y="0" width="1" height="2" fill="#000"/><rect x="3" y="0" width="1" height="2" fill="#000"/><rect x="6" y="0" width="1" height="2" fill="#000"/></svg>
<svg class="a" style="left:716px;top:244px" width="7" height="6" shape-rendering="crispEdges"><rect x="0" y="0" width="2" height="1" fill="#000"/><rect x="5" y="0" width="2" height="1" fill="#000"/><rect x="1" y="1" width="2" height="1" fill="#000"/><rect x="4" y="1" width="2" height="1" fill="#000"/><rect x="2" y="2" width="3" height="1" fill="#000"/><rect x="2" y="3" width="3" height="1" fill="#000"/><rect x="1" y="4" width="2" height="1" fill="#000"/><rect x="4" y="4" width="2" height="1" fill="#000"/><rect x="0" y="5" width="2" height="1" fill="#000"/><rect x="5" y="5" width="2" height="1" fill="#000"/></svg>
<div class="t" style="left:199px;top:268px;"><span class="s">ФИО:</span></div>
<div class="a" style="left:324px;top:264px;width:403px;height:19px;border:1px solid #8c7c64;background:#fdf9fd;"></div>
<div class="t" style="left:327px;top:268px;"><span class="s">Булочкин Петр Иванович</span></div>
<div class="t" style="left:199px;top:292px;"><span class="s">Документ:</span></div>
<div class="a" style="left:324px;top:288px;width:403px;height:19px;border:1px solid #8c7c64;background:#fdf9fd;"></div>
<div class="t" style="left:199px;top:316px;"><span class="s">ИНН:</span></div>
<div class="a" style="left:324px;top:312px;width:80px;height:19px;border:1px solid #8c7c64;background:#fdf9fd;"></div>
<div class="t" style="left:199px;top:345px;"><span class="s">Головной контрагент:</span></div>
<div class="a" style="left:324px;top:341px;width:403px;height:19px;border:1px solid #8c7c64;background:#fdf9fd;"></div>
<div class="a" style="left:698px;top:341px;width:15px;height:19px;border:1px solid #8c7c64;background:#e9d9d3;"></div>
<div class="a" style="left:712px;top:341px;width:15px;height:19px;border:1px solid #8c7c64;background:#e9d9d3;"></div>
<svg class="a" style="left:702px;top:352px;" width="8" height="2" viewBox="0 0 8 2" shape-rendering="crispEdges"><rect x="0" y="0" width="1" height="2" fill="#000"/><rect x="3" y="0" width="1" height="2" fill="#000"/><rect x="6" y="0" width="1" height="2" fill="#000"/></svg>
<svg class="a" style="left:716px;top:348px" width="7" height="6" shape-rendering="crispEdges"><rect x="0" y="0" width="2" height="1" fill="#000"/><rect x="5" y="0" width="2" height="1" fill="#000"/><rect x="1" y="1" width="2" height="1" fill="#000"/><rect x="4" y="1" width="2" height="1" fill="#000"/><rect x="2" y="2" width="3" height="1" fill="#000"/><rect x="2" y="3" width="3" height="1" fill="#000"/><rect x="1" y="4" width="2" height="1" fill="#000"/><rect x="4" y="4" width="2" height="1" fill="#000"/><rect x="0" y="5" width="2" height="1" fill="#000"/><rect x="5" y="5" width="2" height="1" fill="#000"/></svg>
<div class="a" style="left:324px;top:213px;width:105px;height:19px;border:1px solid #8c7c64;background:#fdf9fd;"></div>
<div class="a" style="left:414px;top:213px;width:15px;height:19px;border:1px solid #8c7c64;background:#e9d9d3;"></div>
<svg class="a" style="left:418px;top:224px;" width="8" height="2" viewBox="0 0 8 2" shape-rendering="crispEdges"><rect x="0" y="0" width="1" height="2" fill="#000"/><rect x="3" y="0" width="1" height="2" fill="#000"/><rect x="6" y="0" width="1" height="2" fill="#000"/></svg>
<div class="t" style="left:327px;top:217px;letter-spacing:0.375px;"><span class="s">Физ. лицо</span></div>
<div class="a" style="left:324px;top:232px;width:105px;height:36px;background:#8c7c64;"></div>
<div class="a" style="left:325px;top:232px;width:103px;height:18px;background:#fdf9fd;"></div>
<div class="a" style="left:325px;top:250px;width:103px;height:17px;background:#0d0880;"></div>
<div class="t" style="left:327px;top:235px;letter-spacing:-0.43px;"><span class="s">Юр. лицо</span></div>
<div class="t" style="left:327px;top:252px;color:#fff;letter-spacing:0.375px;"><span class="s">Физ. лицо</span></div>
<div class="t" style="left:192px;top:420px;"><span class="s">Комментарий:</span></div>
<div class="a" style="left:278px;top:416px;width:456px;height:19px;border:1px solid #8c7c64;background:#fdf9fd;"></div>
<div class="t" style="left:601px;top:450px;font-weight:bold;"><span class="s">OK</span></div>
<div class="a" style="left:624px;top:447px;width:1px;height:18px;background:#d4c0b0;"></div>
<div class="t" style="left:631px;top:450px;"><span class="s">Записать</span></div>
<div class="a" style="left:685px;top:447px;width:1px;height:18px;background:#d4c0b0;"></div>
<div class="t" style="left:692px;top:450px;letter-spacing:0.33px;"><span class="s">Закрыть</span></div>
</body></html>
